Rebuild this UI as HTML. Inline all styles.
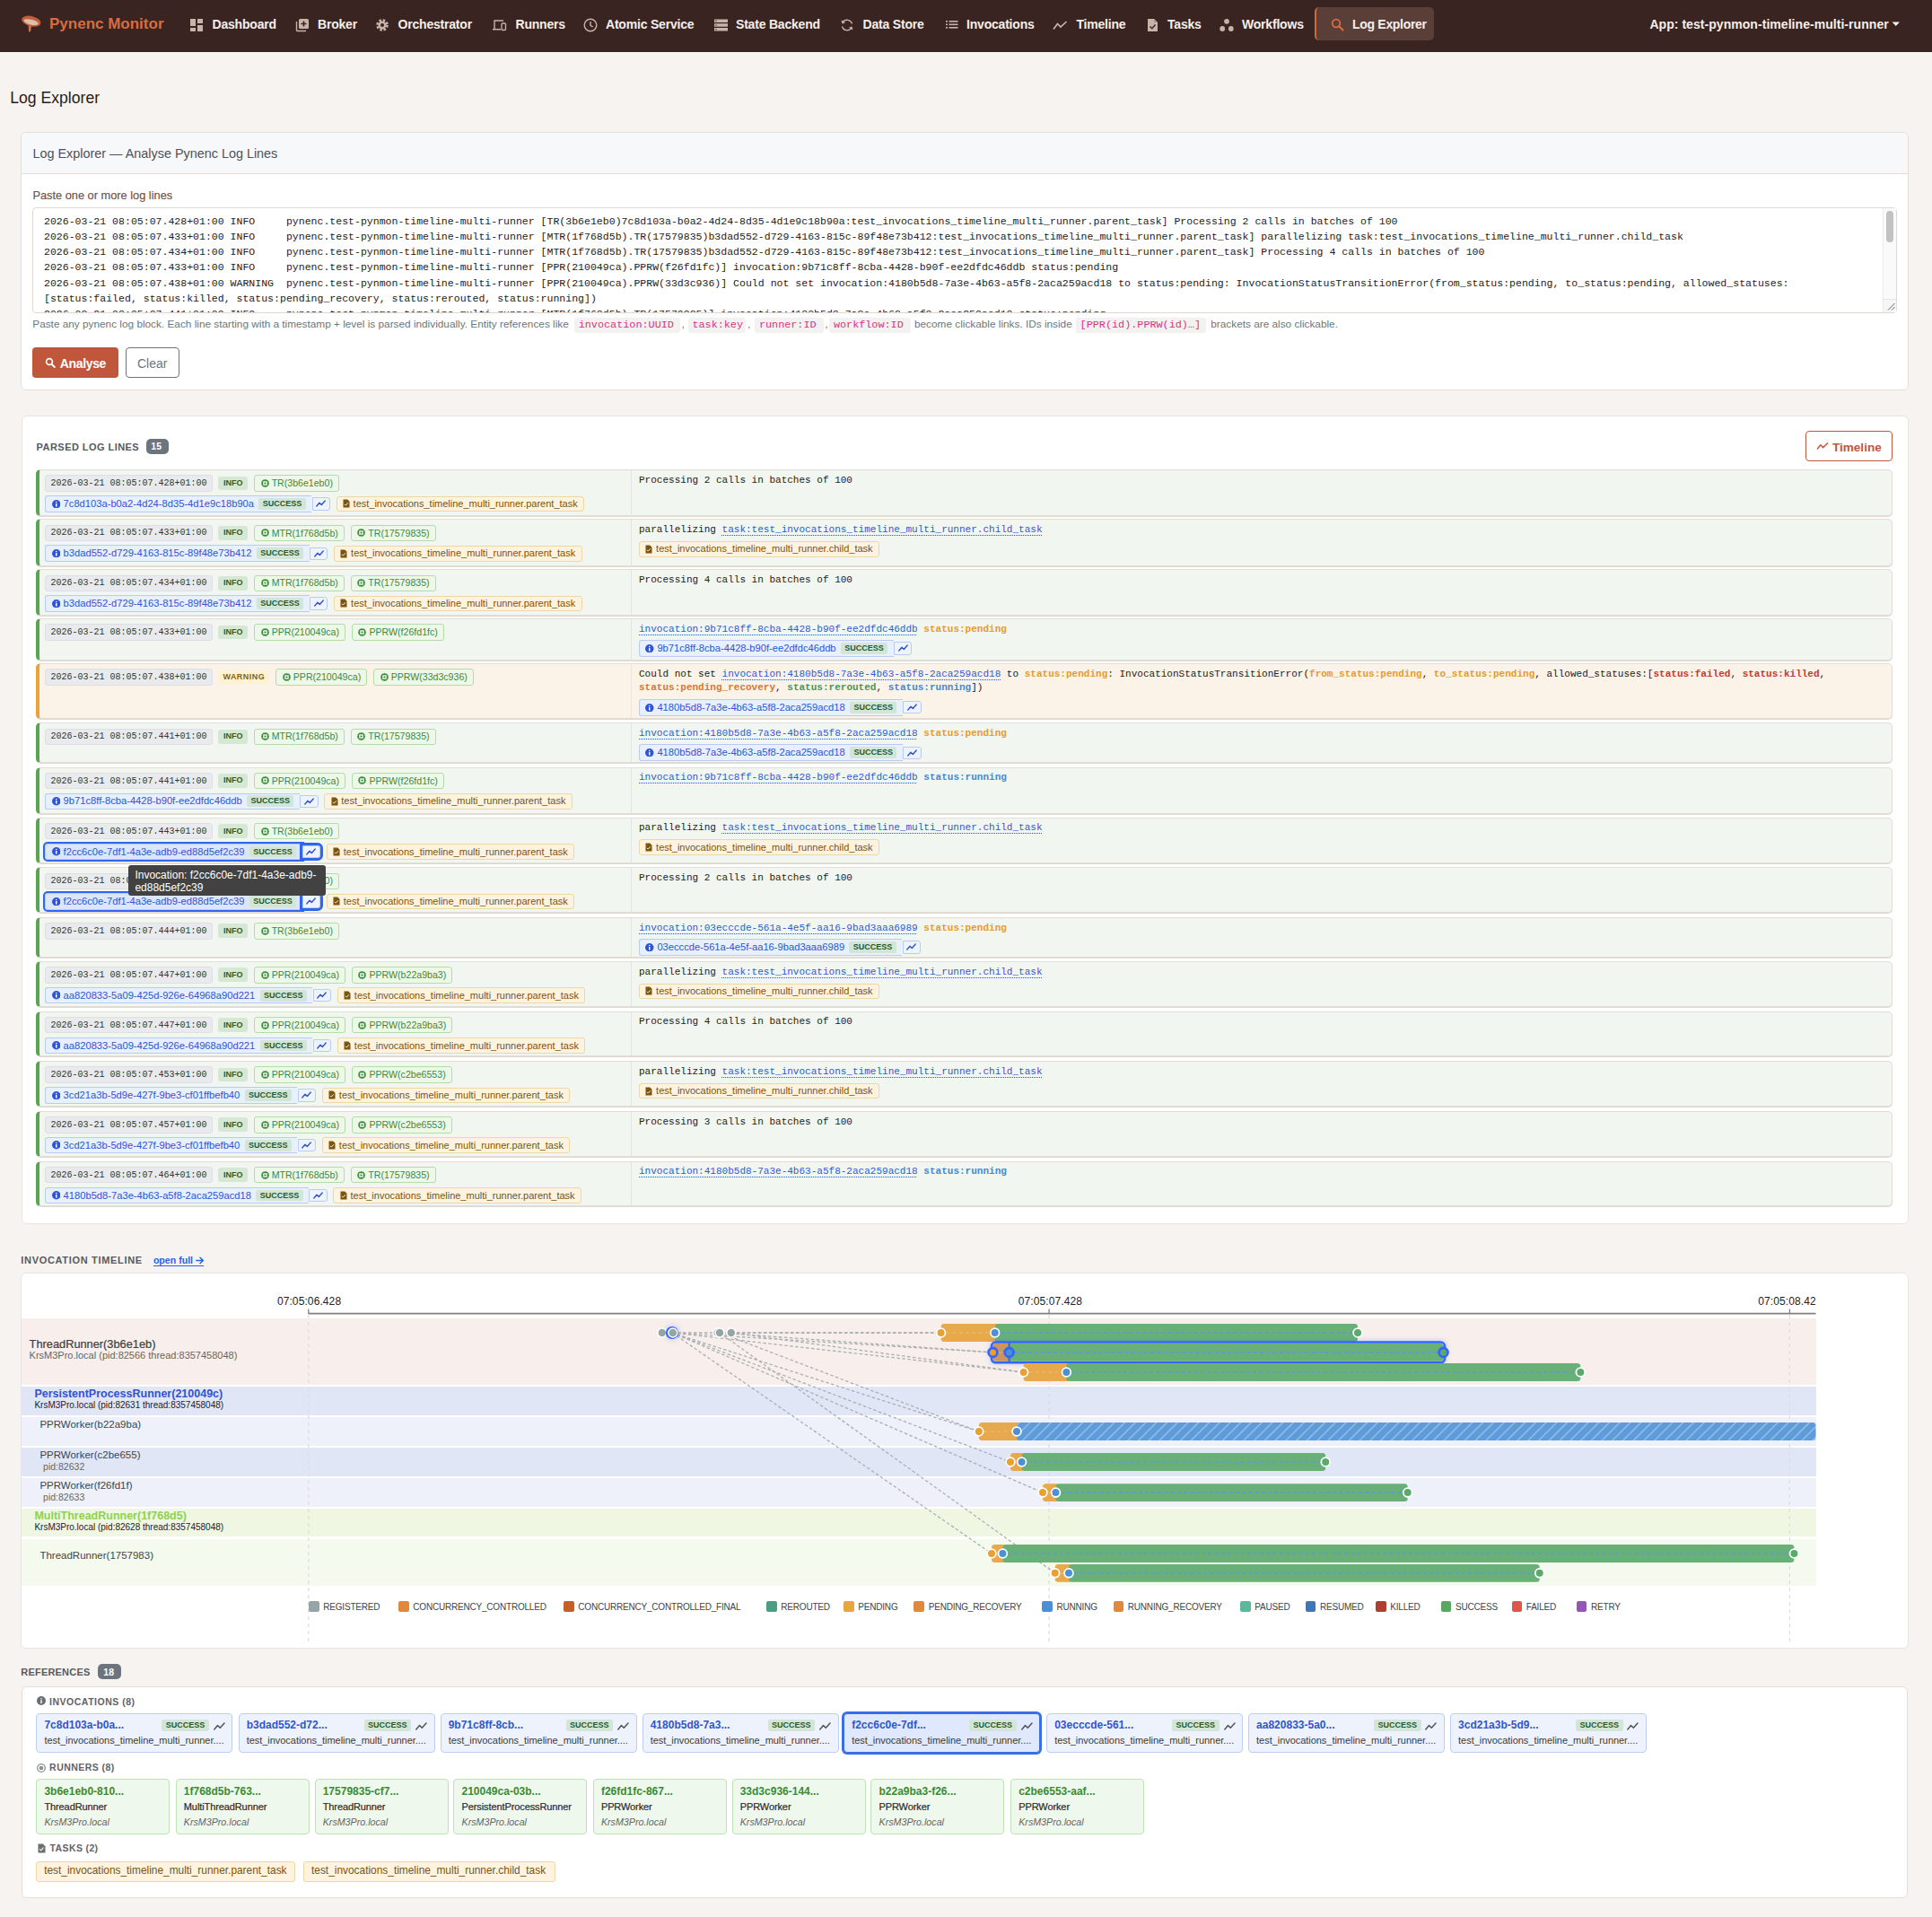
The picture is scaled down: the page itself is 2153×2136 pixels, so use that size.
<!DOCTYPE html>
<html><head><meta charset="utf-8"><title>Log Explorer</title><style>
html,body{margin:0;padding:0}
body{width:2153px;height:2136px;position:relative;overflow:hidden;background:#f7f3f0;font-family:'Liberation Sans',sans-serif}
.t{position:absolute;white-space:pre}
.b{position:absolute}
.row{position:absolute;left:40px;width:2069.3px;background:#f1f6f0;border:1px solid #e3ddd6;border-left:4px solid #5aa454;border-radius:5px;box-sizing:border-box;box-shadow:0 1px 0 #e0d9d2}
.row::after{content:"";position:absolute;left:659.4px;top:0;bottom:0;width:1px;background:#e0e4e8}
.warnrow{background:#fbf2e8;border-left-color:#e8a43a}
.warnrow::after{background:#efe5da}
.ln{position:absolute;display:flex;align-items:center;gap:6.7px;height:18.4px;white-space:nowrap}
.tsp{font:400 10px/1 'Liberation Mono',monospace;color:#333;background:#e9eaee;border:1px solid #dedfe4;border-radius:3px;height:18.4px;padding:1.2px 5.2px 0;display:flex;align-items:center;box-sizing:border-box}
.lvl{font:700 9px/1 'Liberation Sans',sans-serif;color:#2c5e2c;background:#d5e8d3;border-radius:3px;height:15.8px;padding:0 5.7px;display:flex;align-items:center;box-sizing:border-box}
.lvl.warn{color:#86620e;background:#fdf3d2;padding:0 5.2px;letter-spacing:0.45px}
.rp{display:flex;align-items:center;gap:3.1px;height:18.4px;padding:0 6px 0 6.7px;border:1px solid #b2dca8;background:#edf8e9;color:#3c8a3c;font:400 10.6px/1 'Liberation Sans',sans-serif;border-radius:3px;box-sizing:border-box}
.ig{display:flex;align-items:center;height:18.5px}
.ip{display:flex;align-items:center;height:18.5px;box-sizing:border-box;border:1px solid #b8ccf3;border-right:none;background:#e8effd;border-radius:3px 0 0 3px;padding:0 0 0 6.4px;color:#2f55d4;font:400 11.18px/1 'Liberation Sans',sans-serif}
.iid{margin-left:3.5px}
.suc{margin-left:5.3px;margin-right:6.5px;font:700 9px/1 'Liberation Sans',sans-serif;color:#1f5a2e;background:#d3e5d6;height:12.7px;padding:0 4.45px;border-radius:2px;display:flex;align-items:center}
.ib{display:flex;align-items:center;justify-content:center;width:20.3px;height:14.4px;box-sizing:border-box;border:1px solid #b8ccf3;background:#eef3fd;border-radius:0 3px 3px 0;margin-left:0.3px}
.hl .ip{background:#dce6fb;outline:2.3px solid #2f66f0}
.hl .ib{outline:3px solid #2f66f0;margin-left:0}
.tp{display:flex;align-items:center;gap:3.7px;height:17.7px;padding:0 6.3px 0 6.4px;border:1px solid #efd6a6;background:#fdf3df;color:#7a5510;font:400 11px/1 'Liberation Sans',sans-serif;border-radius:3px;box-sizing:border-box}
.msg{position:absolute;left:712px;width:1390px;font:400 11.02px/15.7px 'Liberation Mono',monospace;color:#222;white-space:nowrap}
.lk{color:#2d5bd8;text-decoration:underline dotted #2d5bd8;text-underline-offset:2.5px;text-decoration-thickness:1px}
.st{font-weight:700}
.tip{position:absolute;background:#424242;border-radius:3px}
</style></head>
<body>
<div class="b" style="left:0.00px;top:0.00px;width:2153.00px;height:58.00px;background:#3a2422"></div><svg class="b" style="left:18.00px;top:12.00px;" width="40" height="32" viewBox="0 0 40 32"><path d="M13.6 15.5 L17.2 15.8 L16.2 22.6 Q15.3 24.6 14 23 Z" fill="#c9714e"/>
<ellipse cx="16.8" cy="11.6" rx="10.9" ry="5.6" transform="rotate(14 16.8 11.6)" fill="#c45f38"/>
<ellipse cx="16.6" cy="12.6" rx="8.3" ry="2.9" transform="rotate(14 16.6 12.6)" fill="#dcbfae"/></svg><div class="t" style="left:55.0px;top:17.85px;font:600 17px/1 'Liberation Sans',sans-serif;color:#d96d3d;">Pynenc Monitor</div><svg class="b" style="left:210.50px;top:20.00px;" width="16" height="16" viewBox="0 0 16 16"><rect x="1" y="1" width="6" height="8" fill="#c9b3a9"/><rect x="9" y="1" width="6" height="5" fill="#c9b3a9"/><rect x="1" y="11" width="6" height="4" fill="#c9b3a9"/><rect x="9" y="8" width="6" height="7" fill="#c9b3a9"/></svg><div class="t" style="left:236.5px;top:20.10px;font:600 14px/1 'Liberation Sans',sans-serif;color:#f5efeb;letter-spacing:-0.2px;">Dashboard</div><svg class="b" style="left:329.00px;top:20.00px;" width="16" height="16" viewBox="0 0 16 16"><rect x="4" y="1" width="11" height="11" rx="1.5" fill="#c9b3a9"/><path d="M1.5 4 V13.5 a1 1 0 0 0 1 1 H12" stroke="#c9b3a9" stroke-width="1.4" fill="none"/><path d="M9.5 3.5 V9.5 M6.5 6.5 H12.5" stroke="#3a2422" stroke-width="1.6"/></svg><div class="t" style="left:354.0px;top:20.10px;font:600 14px/1 'Liberation Sans',sans-serif;color:#f5efeb;letter-spacing:-0.2px;">Broker</div><svg class="b" style="left:418.00px;top:20.00px;" width="16" height="16" viewBox="0 0 16 16"><circle cx="8" cy="8" r="5.2" fill="none" stroke="#c9b3a9" stroke-width="3.2" stroke-dasharray="2.3 1.8"/><circle cx="8" cy="8" r="4.5" fill="#c9b3a9"/><circle cx="8" cy="8" r="2" fill="#3a2422"/></svg><div class="t" style="left:443.5px;top:20.10px;font:600 14px/1 'Liberation Sans',sans-serif;color:#f5efeb;letter-spacing:-0.2px;">Orchestrator</div><svg class="b" style="left:548.00px;top:20.00px;" width="18" height="16" viewBox="0 0 18 16"><path d="M2.5 3 H13 M3 3 V12 M1 12.8 H10" stroke="#c9b3a9" stroke-width="1.4" fill="none"/><rect x="11" y="6" width="4.5" height="7.5" rx="1" fill="none" stroke="#c9b3a9" stroke-width="1.3"/></svg><div class="t" style="left:574.5px;top:20.10px;font:600 14px/1 'Liberation Sans',sans-serif;color:#f5efeb;letter-spacing:-0.2px;">Runners</div><svg class="b" style="left:649.50px;top:20.00px;" width="16" height="16" viewBox="0 0 16 16"><circle cx="8" cy="8" r="6.8" fill="none" stroke="#c9b3a9" stroke-width="1.4"/><path d="M8 4 V8.3 L10.8 10" stroke="#c9b3a9" stroke-width="1.4" fill="none"/></svg><div class="t" style="left:675.0px;top:20.10px;font:600 14px/1 'Liberation Sans',sans-serif;color:#f5efeb;letter-spacing:-0.2px;">Atomic Service</div><svg class="b" style="left:794.70px;top:20.00px;" width="16" height="16" viewBox="0 0 16 16"><rect x="1" y="1.5" width="15" height="3.5" fill="#c9b3a9"/><rect x="1" y="6.2" width="15" height="3.5" fill="#c9b3a9"/><rect x="1" y="11" width="15" height="3.5" fill="#c9b3a9"/><circle cx="3" cy="3.2" r=".7" fill="#3a2422"/><circle cx="3" cy="8" r=".7" fill="#3a2422"/><circle cx="3" cy="12.7" r=".7" fill="#3a2422"/></svg><div class="t" style="left:820.0px;top:20.10px;font:600 14px/1 'Liberation Sans',sans-serif;color:#f5efeb;letter-spacing:-0.2px;">State Backend</div><svg class="b" style="left:936.40px;top:20.00px;" width="16" height="16" viewBox="0 0 16 16"><path d="M13.5 6.5 A5.8 5.8 0 0 0 3 5 M2.5 9.5 A5.8 5.8 0 0 0 13 11" stroke="#c9b3a9" stroke-width="1.4" fill="none"/><path d="M1.5 2.5 L2.5 6.5 L6.2 5.2 Z M14.5 13.5 L13.5 9.5 L9.8 10.8 Z" fill="#c9b3a9"/></svg><div class="t" style="left:961.6px;top:20.10px;font:600 14px/1 'Liberation Sans',sans-serif;color:#f5efeb;letter-spacing:-0.2px;">Data Store</div><svg class="b" style="left:1053.00px;top:20.00px;" width="16" height="16" viewBox="0 0 16 16"><rect x="1" y="3" width="2" height="1.6" fill="#c9b3a9"/><rect x="1" y="6.5" width="2" height="1.6" fill="#c9b3a9"/><rect x="1" y="10" width="2" height="1.6" fill="#c9b3a9"/><rect x="4.5" y="3" width="10" height="1.6" fill="#c9b3a9"/><rect x="4.5" y="6.5" width="10" height="1.6" fill="#c9b3a9"/><rect x="4.5" y="10" width="10" height="1.6" fill="#c9b3a9"/></svg><div class="t" style="left:1077.0px;top:20.10px;font:600 14px/1 'Liberation Sans',sans-serif;color:#f5efeb;letter-spacing:-0.2px;">Invocations</div><svg class="b" style="left:1173.00px;top:20.00px;" width="17" height="16" viewBox="0 0 17 16"><path d="M1 12.5 L5.5 6.5 L9 10 L15.5 4" stroke="#c9b3a9" stroke-width="1.7" fill="none"/></svg><div class="t" style="left:1199.4px;top:20.10px;font:600 14px/1 'Liberation Sans',sans-serif;color:#f5efeb;letter-spacing:-0.2px;">Timeline</div><svg class="b" style="left:1277.00px;top:20.00px;" width="14" height="16" viewBox="0 0 14 16"><path d="M2 1 H9 L13 5 V15 H2 Z" fill="#c9b3a9"/><path d="M9 1 V5 H13" fill="#a8928a"/><path d="M4.5 9.5 L6.8 11.8 L10.5 7.5" stroke="#3a2422" stroke-width="1.4" fill="none"/></svg><div class="t" style="left:1301.0px;top:20.10px;font:600 14px/1 'Liberation Sans',sans-serif;color:#f5efeb;letter-spacing:-0.2px;">Tasks</div><svg class="b" style="left:1359.00px;top:20.00px;" width="16" height="16" viewBox="0 0 16 16"><circle cx="8" cy="3.8" r="2.9" fill="#c9b3a9"/><circle cx="3.2" cy="12" r="2.9" fill="#c9b3a9"/><circle cx="12.8" cy="12" r="2.9" fill="#c9b3a9"/></svg><div class="t" style="left:1384.0px;top:20.10px;font:600 14px/1 'Liberation Sans',sans-serif;color:#f5efeb;letter-spacing:-0.2px;">Workflows</div><div class="b" style="left:1465.00px;top:8.00px;width:133.00px;height:37.00px;background:#5a3e38;border-radius:5px;border-left:2px solid #d2693a;box-sizing:border-box"></div><svg class="b" style="left:1483.00px;top:20.00px;" width="15" height="15" viewBox="0 0 15 15"><circle cx="6" cy="6" r="4.3" fill="none" stroke="#d96d3d" stroke-width="1.8"/><path d="M9.2 9.2 L13.5 13.5" stroke="#d96d3d" stroke-width="2" stroke-linecap="round"/></svg><div class="t" style="left:1507.0px;top:20.10px;font:600 14px/1 'Liberation Sans',sans-serif;color:#f5efeb;letter-spacing:-0.3px;">Log Explorer</div><div class="t" style="left:1838.4px;top:20.10px;font:600 14px/1 'Liberation Sans',sans-serif;color:#f5efeb;letter-spacing:0.05px;">App: test-pynmon-timeline-multi-runner</div><svg class="b" style="left:2108.00px;top:24.00px;" width="10" height="6" viewBox="0 0 10 6"><path d="M0.5 0.5 H9 L4.75 5 Z" fill="#f5efeb"/></svg><div class="t" style="left:11.3px;top:101.24px;font:400 17.6px/1 'Liberation Sans',sans-serif;color:#2a1c18;">Log Explorer</div><div class="b" style="left:23.00px;top:147.00px;width:2103.80px;height:287.60px;background:#fff;border:1px solid #e6ddd7;border-radius:6px;box-sizing:border-box"></div><div class="b" style="left:24.00px;top:148.00px;width:2101.80px;height:45.80px;background:#f7f8fa;border-bottom:1px solid #e6ddd7;border-radius:5px 5px 0 0;box-sizing:border-box"></div><div class="t" style="left:36.5px;top:163.96px;font:400 14.4px/1 'Liberation Sans',sans-serif;color:#4a5260;">Log Explorer — Analyse Pynenc Log Lines</div><div class="t" style="left:36.4px;top:212.32px;font:400 12.8px/1 'Liberation Sans',sans-serif;color:#6b5248;-webkit-text-stroke:0.15px #6b5248;">Paste one or more log lines</div><div class="b" style="left:36.00px;top:231.40px;width:2078.00px;height:117.20px;background:#fff;border:1px solid #e2d8d2;border-radius:4px;box-sizing:border-box"></div><div class="b" style="left:37px;top:232.4px;width:2061px;height:115.2px;overflow:hidden"><div style="position:absolute;left:12px;top:5.2px;font:400 11.54px/17.23px 'Liberation Mono',monospace;color:#222;white-space:pre">2026-03-21 08:05:07.428+01:00 INFO     pynenc.test-pynmon-timeline-multi-runner [TR(3b6e1eb0)7c8d103a-b0a2-4d24-8d35-4d1e9c18b90a:test_invocations_timeline_multi_runner.parent_task] Processing 2 calls in batches of 100
2026-03-21 08:05:07.433+01:00 INFO     pynenc.test-pynmon-timeline-multi-runner [MTR(1f768d5b).TR(17579835)b3dad552-d729-4163-815c-89f48e73b412:test_invocations_timeline_multi_runner.parent_task] parallelizing task:test_invocations_timeline_multi_runner.child_task
2026-03-21 08:05:07.434+01:00 INFO     pynenc.test-pynmon-timeline-multi-runner [MTR(1f768d5b).TR(17579835)b3dad552-d729-4163-815c-89f48e73b412:test_invocations_timeline_multi_runner.parent_task] Processing 4 calls in batches of 100
2026-03-21 08:05:07.433+01:00 INFO     pynenc.test-pynmon-timeline-multi-runner [PPR(210049ca).PPRW(f26fd1fc)] invocation:9b71c8ff-8cba-4428-b90f-ee2dfdc46ddb status:pending
2026-03-21 08:05:07.438+01:00 WARNING  pynenc.test-pynmon-timeline-multi-runner [PPR(210049ca).PPRW(33d3c936)] Could not set invocation:4180b5d8-7a3e-4b63-a5f8-2aca259acd18 to status:pending: InvocationStatusTransitionError(from_status:pending, to_status:pending, allowed_statuses:
[status:failed, status:killed, status:pending_recovery, status:rerouted, status:running])
2026-03-21 08:05:07.441+01:00 INFO     pynenc.test-pynmon-timeline-multi-runner [MTR(1f768d5b).TR(17579835)] invocation:4180b5d8-7a3e-4b63-a5f8-2aca259acd18 status:pending</div></div><div class="b" style="left:2098.00px;top:232.40px;width:15.00px;height:115.20px;background:#fafafa;border-left:1px solid #ececec;box-sizing:border-box"></div><div class="b" style="left:2102.00px;top:235.30px;width:8.00px;height:34.50px;background:#c2c2c2;border-radius:4px"></div><div class="b" style="left:2098.00px;top:333.00px;width:15.00px;height:14.60px;background:#f6f6f6;border-top:1px solid #e6e6e6;border-left:1px solid #ececec;box-sizing:border-box"></div><svg class="b" style="left:2103.00px;top:337.00px;" width="9" height="9" viewBox="0 0 9 9"><path d="M8.5 1 L1 8.5 M8.5 5 L5 8.5" stroke="#555" stroke-width="0.9"/></svg><div class="t" style="left:36.3px;top:355.97px;font:400 11.8px/1 'Liberation Sans',sans-serif;color:#6c757d;">Paste any pynenc log block. Each line starting with a timestamp + level is parsed individually. Entity references like</div><div class="b" style="left:639.80px;top:354.20px;width:118.20px;height:16.60px;background:#f4f2f1;border-radius:3px"></div><div class="t" style="left:644.7px;top:357.23px;font:400 11.8px/1 'Liberation Mono',monospace;color:#d63384;">invocation:UUID</div><div class="t" style="left:759.5px;top:355.97px;font:400 11.8px/1 'Liberation Sans',sans-serif;color:#6c757d;">,</div><div class="b" style="left:766.50px;top:354.20px;width:64.50px;height:16.60px;background:#f4f2f1;border-radius:3px"></div><div class="t" style="left:771.4px;top:357.23px;font:400 11.8px/1 'Liberation Mono',monospace;color:#d63384;">task:key</div><div class="t" style="left:833.0px;top:355.97px;font:400 11.8px/1 'Liberation Sans',sans-serif;color:#6c757d;">,</div><div class="b" style="left:841.00px;top:354.20px;width:77.00px;height:16.60px;background:#f4f2f1;border-radius:3px"></div><div class="t" style="left:845.9px;top:357.23px;font:400 11.8px/1 'Liberation Mono',monospace;color:#d63384;">runner:ID</div><div class="t" style="left:919.3px;top:355.97px;font:400 11.8px/1 'Liberation Sans',sans-serif;color:#6c757d;">,</div><div class="b" style="left:924.00px;top:354.20px;width:90.50px;height:16.60px;background:#f4f2f1;border-radius:3px"></div><div class="t" style="left:928.9px;top:357.23px;font:400 11.8px/1 'Liberation Mono',monospace;color:#d63384;">workflow:ID</div><div class="t" style="left:1019.0px;top:355.97px;font:400 11.8px/1 'Liberation Sans',sans-serif;color:#6c757d;">become clickable links. IDs inside</div><div class="b" style="left:1198.70px;top:354.20px;width:145.60px;height:16.60px;background:#f4f2f1;border-radius:3px"></div><div class="t" style="left:1203.6px;top:357.23px;font:400 11.8px/1 'Liberation Mono',monospace;color:#d63384;">[PPR(id).PPRW(id)…]</div><div class="t" style="left:1349.3px;top:355.97px;font:400 11.8px/1 'Liberation Sans',sans-serif;color:#6c757d;">brackets are also clickable.</div><div class="b" style="left:36.10px;top:387.30px;width:95.70px;height:34.10px;background:#c0573a;border-radius:4px"></div><svg class="b" style="left:50.00px;top:398.00px;" width="12" height="13" viewBox="0 0 12 13"><circle cx="5" cy="5" r="3.4" fill="none" stroke="#fff" stroke-width="1.7"/><path d="M7.5 7.6 L10.8 11" stroke="#fff" stroke-width="2" stroke-linecap="round"/></svg><div class="t" style="left:66.8px;top:397.50px;font:600 14px/1 'Liberation Sans',sans-serif;color:#fff;letter-spacing:-0.35px;">Analyse</div><div class="b" style="left:140.00px;top:387.30px;width:59.70px;height:34.10px;background:#fff;border:1px solid #6c757d;border-radius:4px;box-sizing:border-box"></div><div class="t" style="left:153.0px;top:397.50px;font:400 14px/1 'Liberation Sans',sans-serif;color:#6c757d;">Clear</div><div class="b" style="left:23.50px;top:463.30px;width:2103.10px;height:900.30px;background:#fff;border:1px solid #e8e4e0;border-radius:6px;box-sizing:border-box"></div><div class="t" style="left:40.6px;top:492.65px;font:600 11px/1 'Liberation Sans',sans-serif;color:#555b61;letter-spacing:0.45px;">PARSED LOG LINES</div><div class="b" style="left:163.00px;top:489.00px;width:24.70px;height:16.80px;background:#6c757d;border-radius:5px"></div><div class="t" style="left:168.3px;top:492.47px;font:700 10.5px/1 'Liberation Sans',sans-serif;color:#fff;">15</div><div class="b" style="left:2011.80px;top:480.40px;width:97.50px;height:33.90px;background:#fff;border:1px solid #c0573a;border-radius:4px;box-sizing:border-box"></div><svg class="b" style="left:2024.00px;top:492.00px;" width="14" height="10" viewBox="0 0 14 10"><path d="M1 8.5 L4.8 3.8 L7.6 6.6 L13 1.5" stroke="#c0573a" stroke-width="1.5" fill="none"/></svg><div class="t" style="left:2041.9px;top:491.84px;font:600 13.6px/1 'Liberation Sans',sans-serif;color:#c0573a;">Timeline</div><div class="row" style="top:523.1px;height:51.6px"></div><div class="ln" style="left:50.2px;top:529.4px"><span class="tsp">2026-03-21 08:05:07.428+01:00</span><span class="lvl">INFO</span><span class="rp"><svg width="9" height="9" viewBox="0 0 9 9" style="flex:none"><rect x="1.6" y="1.6" width="5.8" height="5.8" rx="0.8" fill="none" stroke="#3c8a3c" stroke-width="1.2"/><circle cx="4.5" cy="4.5" r="1.1" fill="#3c8a3c"/><path d="M3 0V1.6M4.5 0V1.6M6 0V1.6M3 7.4V9M4.5 7.4V9M6 7.4V9M0 3H1.6M0 4.5H1.6M0 6H1.6M7.4 3H9M7.4 4.5H9M7.4 6H9" stroke="#3c8a3c" stroke-width="0.9"/></svg><span>TR(3b6e1eb0)</span></span></div><div class="ln" style="left:50.2px;top:552.2px"><span class="ig"><span class="ip"><svg width="9.5" height="9.5" viewBox="0 0 10 10" style="flex:none"><circle cx="5" cy="5" r="5" fill="#2f55d4"/><rect x="4.25" y="4.2" width="1.5" height="3.8" fill="#fff"/><circle cx="5" cy="2.7" r="0.85" fill="#fff"/></svg><span class="iid">7c8d103a-b0a2-4d24-8d35-4d1e9c18b90a</span><span class="suc">SUCCESS</span></span><span class="ib"><svg width="11" height="8" viewBox="0 0 11 8" style="flex:none"><path d="M0.8 7 L4 3.3 L6.3 5.5 L10.2 1" stroke="#2f55d4" stroke-width="1.4" fill="none" stroke-linecap="round" stroke-linejoin="round"/></svg></span></span><span class="tp"><svg width="8" height="10" viewBox="0 0 8 10" style="flex:none"><path d="M0.5 0.5 H5.2 L7.5 2.8 V9.5 H0.5 Z" fill="#7a5510"/><path d="M2 5.8 L3.3 7.1 L5.8 4.3" stroke="#fdf2de" stroke-width="1" fill="none"/></svg><span>test_invocations_timeline_multi_runner.parent_task</span></span></div><div class="msg" style="top:527.7px">Processing 2 calls in batches of 100</div><div class="row" style="top:578.4px;height:52.2px"></div><div class="ln" style="left:50.2px;top:584.7px"><span class="tsp">2026-03-21 08:05:07.433+01:00</span><span class="lvl">INFO</span><span class="rp"><svg width="9" height="9" viewBox="0 0 9 9" style="flex:none"><rect x="1.6" y="1.6" width="5.8" height="5.8" rx="0.8" fill="none" stroke="#3c8a3c" stroke-width="1.2"/><circle cx="4.5" cy="4.5" r="1.1" fill="#3c8a3c"/><path d="M3 0V1.6M4.5 0V1.6M6 0V1.6M3 7.4V9M4.5 7.4V9M6 7.4V9M0 3H1.6M0 4.5H1.6M0 6H1.6M7.4 3H9M7.4 4.5H9M7.4 6H9" stroke="#3c8a3c" stroke-width="0.9"/></svg><span>MTR(1f768d5b)</span></span><span class="rp"><svg width="9" height="9" viewBox="0 0 9 9" style="flex:none"><rect x="1.6" y="1.6" width="5.8" height="5.8" rx="0.8" fill="none" stroke="#3c8a3c" stroke-width="1.2"/><circle cx="4.5" cy="4.5" r="1.1" fill="#3c8a3c"/><path d="M3 0V1.6M4.5 0V1.6M6 0V1.6M3 7.4V9M4.5 7.4V9M6 7.4V9M0 3H1.6M0 4.5H1.6M0 6H1.6M7.4 3H9M7.4 4.5H9M7.4 6H9" stroke="#3c8a3c" stroke-width="0.9"/></svg><span>TR(17579835)</span></span></div><div class="ln" style="left:50.2px;top:607.5px"><span class="ig"><span class="ip"><svg width="9.5" height="9.5" viewBox="0 0 10 10" style="flex:none"><circle cx="5" cy="5" r="5" fill="#2f55d4"/><rect x="4.25" y="4.2" width="1.5" height="3.8" fill="#fff"/><circle cx="5" cy="2.7" r="0.85" fill="#fff"/></svg><span class="iid">b3dad552-d729-4163-815c-89f48e73b412</span><span class="suc">SUCCESS</span></span><span class="ib"><svg width="11" height="8" viewBox="0 0 11 8" style="flex:none"><path d="M0.8 7 L4 3.3 L6.3 5.5 L10.2 1" stroke="#2f55d4" stroke-width="1.4" fill="none" stroke-linecap="round" stroke-linejoin="round"/></svg></span></span><span class="tp"><svg width="8" height="10" viewBox="0 0 8 10" style="flex:none"><path d="M0.5 0.5 H5.2 L7.5 2.8 V9.5 H0.5 Z" fill="#7a5510"/><path d="M2 5.8 L3.3 7.1 L5.8 4.3" stroke="#fdf2de" stroke-width="1" fill="none"/></svg><span>test_invocations_timeline_multi_runner.parent_task</span></span></div><div class="msg" style="top:583.0px">parallelizing <span class="lk">task:test_invocations_timeline_multi_runner.child_task</span></div><div class="ln" style="left:712px;top:602.7px"><span class="tp"><svg width="8" height="10" viewBox="0 0 8 10" style="flex:none"><path d="M0.5 0.5 H5.2 L7.5 2.8 V9.5 H0.5 Z" fill="#7a5510"/><path d="M2 5.8 L3.3 7.1 L5.8 4.3" stroke="#fdf2de" stroke-width="1" fill="none"/></svg><span>test_invocations_timeline_multi_runner.child_task</span></span></div><div class="row" style="top:634.2px;height:51.6px"></div><div class="ln" style="left:50.2px;top:640.5px"><span class="tsp">2026-03-21 08:05:07.434+01:00</span><span class="lvl">INFO</span><span class="rp"><svg width="9" height="9" viewBox="0 0 9 9" style="flex:none"><rect x="1.6" y="1.6" width="5.8" height="5.8" rx="0.8" fill="none" stroke="#3c8a3c" stroke-width="1.2"/><circle cx="4.5" cy="4.5" r="1.1" fill="#3c8a3c"/><path d="M3 0V1.6M4.5 0V1.6M6 0V1.6M3 7.4V9M4.5 7.4V9M6 7.4V9M0 3H1.6M0 4.5H1.6M0 6H1.6M7.4 3H9M7.4 4.5H9M7.4 6H9" stroke="#3c8a3c" stroke-width="0.9"/></svg><span>MTR(1f768d5b)</span></span><span class="rp"><svg width="9" height="9" viewBox="0 0 9 9" style="flex:none"><rect x="1.6" y="1.6" width="5.8" height="5.8" rx="0.8" fill="none" stroke="#3c8a3c" stroke-width="1.2"/><circle cx="4.5" cy="4.5" r="1.1" fill="#3c8a3c"/><path d="M3 0V1.6M4.5 0V1.6M6 0V1.6M3 7.4V9M4.5 7.4V9M6 7.4V9M0 3H1.6M0 4.5H1.6M0 6H1.6M7.4 3H9M7.4 4.5H9M7.4 6H9" stroke="#3c8a3c" stroke-width="0.9"/></svg><span>TR(17579835)</span></span></div><div class="ln" style="left:50.2px;top:663.3px"><span class="ig"><span class="ip"><svg width="9.5" height="9.5" viewBox="0 0 10 10" style="flex:none"><circle cx="5" cy="5" r="5" fill="#2f55d4"/><rect x="4.25" y="4.2" width="1.5" height="3.8" fill="#fff"/><circle cx="5" cy="2.7" r="0.85" fill="#fff"/></svg><span class="iid">b3dad552-d729-4163-815c-89f48e73b412</span><span class="suc">SUCCESS</span></span><span class="ib"><svg width="11" height="8" viewBox="0 0 11 8" style="flex:none"><path d="M0.8 7 L4 3.3 L6.3 5.5 L10.2 1" stroke="#2f55d4" stroke-width="1.4" fill="none" stroke-linecap="round" stroke-linejoin="round"/></svg></span></span><span class="tp"><svg width="8" height="10" viewBox="0 0 8 10" style="flex:none"><path d="M0.5 0.5 H5.2 L7.5 2.8 V9.5 H0.5 Z" fill="#7a5510"/><path d="M2 5.8 L3.3 7.1 L5.8 4.3" stroke="#fdf2de" stroke-width="1" fill="none"/></svg><span>test_invocations_timeline_multi_runner.parent_task</span></span></div><div class="msg" style="top:638.8px">Processing 4 calls in batches of 100</div><div class="row" style="top:689.0px;height:46.9px"></div><div class="ln" style="left:50.2px;top:695.3px"><span class="tsp">2026-03-21 08:05:07.433+01:00</span><span class="lvl">INFO</span><span class="rp"><svg width="9" height="9" viewBox="0 0 9 9" style="flex:none"><rect x="1.6" y="1.6" width="5.8" height="5.8" rx="0.8" fill="none" stroke="#3c8a3c" stroke-width="1.2"/><circle cx="4.5" cy="4.5" r="1.1" fill="#3c8a3c"/><path d="M3 0V1.6M4.5 0V1.6M6 0V1.6M3 7.4V9M4.5 7.4V9M6 7.4V9M0 3H1.6M0 4.5H1.6M0 6H1.6M7.4 3H9M7.4 4.5H9M7.4 6H9" stroke="#3c8a3c" stroke-width="0.9"/></svg><span>PPR(210049ca)</span></span><span class="rp"><svg width="9" height="9" viewBox="0 0 9 9" style="flex:none"><rect x="1.6" y="1.6" width="5.8" height="5.8" rx="0.8" fill="none" stroke="#3c8a3c" stroke-width="1.2"/><circle cx="4.5" cy="4.5" r="1.1" fill="#3c8a3c"/><path d="M3 0V1.6M4.5 0V1.6M6 0V1.6M3 7.4V9M4.5 7.4V9M6 7.4V9M0 3H1.6M0 4.5H1.6M0 6H1.6M7.4 3H9M7.4 4.5H9M7.4 6H9" stroke="#3c8a3c" stroke-width="0.9"/></svg><span>PPRW(f26fd1fc)</span></span></div><div class="msg" style="top:693.6px"><span class="lk">invocation:9b71c8ff-8cba-4428-b90f-ee2dfdc46ddb</span> <b class="st" style="color:#e89a2c">status:pending</b></div><div class="ln" style="left:712px;top:713.3px"><span class="ig"><span class="ip"><svg width="9.5" height="9.5" viewBox="0 0 10 10" style="flex:none"><circle cx="5" cy="5" r="5" fill="#2f55d4"/><rect x="4.25" y="4.2" width="1.5" height="3.8" fill="#fff"/><circle cx="5" cy="2.7" r="0.85" fill="#fff"/></svg><span class="iid">9b71c8ff-8cba-4428-b90f-ee2dfdc46ddb</span><span class="suc">SUCCESS</span></span><span class="ib"><svg width="11" height="8" viewBox="0 0 11 8" style="flex:none"><path d="M0.8 7 L4 3.3 L6.3 5.5 L10.2 1" stroke="#2f55d4" stroke-width="1.4" fill="none" stroke-linecap="round" stroke-linejoin="round"/></svg></span></span></div><div class="row warnrow" style="top:739.1px;height:62.1px"></div><div class="ln" style="left:50.2px;top:745.4px"><span class="tsp">2026-03-21 08:05:07.438+01:00</span><span class="lvl warn">WARNING</span><span class="rp"><svg width="9" height="9" viewBox="0 0 9 9" style="flex:none"><rect x="1.6" y="1.6" width="5.8" height="5.8" rx="0.8" fill="none" stroke="#3c8a3c" stroke-width="1.2"/><circle cx="4.5" cy="4.5" r="1.1" fill="#3c8a3c"/><path d="M3 0V1.6M4.5 0V1.6M6 0V1.6M3 7.4V9M4.5 7.4V9M6 7.4V9M0 3H1.6M0 4.5H1.6M0 6H1.6M7.4 3H9M7.4 4.5H9M7.4 6H9" stroke="#3c8a3c" stroke-width="0.9"/></svg><span>PPR(210049ca)</span></span><span class="rp"><svg width="9" height="9" viewBox="0 0 9 9" style="flex:none"><rect x="1.6" y="1.6" width="5.8" height="5.8" rx="0.8" fill="none" stroke="#3c8a3c" stroke-width="1.2"/><circle cx="4.5" cy="4.5" r="1.1" fill="#3c8a3c"/><path d="M3 0V1.6M4.5 0V1.6M6 0V1.6M3 7.4V9M4.5 7.4V9M6 7.4V9M0 3H1.6M0 4.5H1.6M0 6H1.6M7.4 3H9M7.4 4.5H9M7.4 6H9" stroke="#3c8a3c" stroke-width="0.9"/></svg><span>PPRW(33d3c936)</span></span></div><div class="msg" style="top:743.7px">Could not set <span class="lk">invocation:4180b5d8-7a3e-4b63-a5f8-2aca259acd18</span> to <b class="st" style="color:#e89a2c">status:pending</b>: InvocationStatusTransitionError(<b class="st" style="color:#e89a2c">from_status:pending</b>, <b class="st" style="color:#e89a2c">to_status:pending</b>, allowed_statuses:[<b class="st" style="color:#c4392f">status:failed</b>, <b class="st" style="color:#c4392f">status:killed</b>,<br><b class="st" style="color:#d9772e">status:pending_recovery</b>, <b class="st" style="color:#3d9a5c">status:rerouted</b>, <b class="st" style="color:#3f8ad6">status:running</b>])</div><div class="ln" style="left:712px;top:779.1px"><span class="ig"><span class="ip"><svg width="9.5" height="9.5" viewBox="0 0 10 10" style="flex:none"><circle cx="5" cy="5" r="5" fill="#2f55d4"/><rect x="4.25" y="4.2" width="1.5" height="3.8" fill="#fff"/><circle cx="5" cy="2.7" r="0.85" fill="#fff"/></svg><span class="iid">4180b5d8-7a3e-4b63-a5f8-2aca259acd18</span><span class="suc">SUCCESS</span></span><span class="ib"><svg width="11" height="8" viewBox="0 0 11 8" style="flex:none"><path d="M0.8 7 L4 3.3 L6.3 5.5 L10.2 1" stroke="#2f55d4" stroke-width="1.4" fill="none" stroke-linecap="round" stroke-linejoin="round"/></svg></span></span></div><div class="row" style="top:805.2px;height:45.1px"></div><div class="ln" style="left:50.2px;top:811.5px"><span class="tsp">2026-03-21 08:05:07.441+01:00</span><span class="lvl">INFO</span><span class="rp"><svg width="9" height="9" viewBox="0 0 9 9" style="flex:none"><rect x="1.6" y="1.6" width="5.8" height="5.8" rx="0.8" fill="none" stroke="#3c8a3c" stroke-width="1.2"/><circle cx="4.5" cy="4.5" r="1.1" fill="#3c8a3c"/><path d="M3 0V1.6M4.5 0V1.6M6 0V1.6M3 7.4V9M4.5 7.4V9M6 7.4V9M0 3H1.6M0 4.5H1.6M0 6H1.6M7.4 3H9M7.4 4.5H9M7.4 6H9" stroke="#3c8a3c" stroke-width="0.9"/></svg><span>MTR(1f768d5b)</span></span><span class="rp"><svg width="9" height="9" viewBox="0 0 9 9" style="flex:none"><rect x="1.6" y="1.6" width="5.8" height="5.8" rx="0.8" fill="none" stroke="#3c8a3c" stroke-width="1.2"/><circle cx="4.5" cy="4.5" r="1.1" fill="#3c8a3c"/><path d="M3 0V1.6M4.5 0V1.6M6 0V1.6M3 7.4V9M4.5 7.4V9M6 7.4V9M0 3H1.6M0 4.5H1.6M0 6H1.6M7.4 3H9M7.4 4.5H9M7.4 6H9" stroke="#3c8a3c" stroke-width="0.9"/></svg><span>TR(17579835)</span></span></div><div class="msg" style="top:809.8px"><span class="lk">invocation:4180b5d8-7a3e-4b63-a5f8-2aca259acd18</span> <b class="st" style="color:#e89a2c">status:pending</b></div><div class="ln" style="left:712px;top:829.5px"><span class="ig"><span class="ip"><svg width="9.5" height="9.5" viewBox="0 0 10 10" style="flex:none"><circle cx="5" cy="5" r="5" fill="#2f55d4"/><rect x="4.25" y="4.2" width="1.5" height="3.8" fill="#fff"/><circle cx="5" cy="2.7" r="0.85" fill="#fff"/></svg><span class="iid">4180b5d8-7a3e-4b63-a5f8-2aca259acd18</span><span class="suc">SUCCESS</span></span><span class="ib"><svg width="11" height="8" viewBox="0 0 11 8" style="flex:none"><path d="M0.8 7 L4 3.3 L6.3 5.5 L10.2 1" stroke="#2f55d4" stroke-width="1.4" fill="none" stroke-linecap="round" stroke-linejoin="round"/></svg></span></span></div><div class="row" style="top:854.5px;height:52.2px"></div><div class="ln" style="left:50.2px;top:860.8px"><span class="tsp">2026-03-21 08:05:07.441+01:00</span><span class="lvl">INFO</span><span class="rp"><svg width="9" height="9" viewBox="0 0 9 9" style="flex:none"><rect x="1.6" y="1.6" width="5.8" height="5.8" rx="0.8" fill="none" stroke="#3c8a3c" stroke-width="1.2"/><circle cx="4.5" cy="4.5" r="1.1" fill="#3c8a3c"/><path d="M3 0V1.6M4.5 0V1.6M6 0V1.6M3 7.4V9M4.5 7.4V9M6 7.4V9M0 3H1.6M0 4.5H1.6M0 6H1.6M7.4 3H9M7.4 4.5H9M7.4 6H9" stroke="#3c8a3c" stroke-width="0.9"/></svg><span>PPR(210049ca)</span></span><span class="rp"><svg width="9" height="9" viewBox="0 0 9 9" style="flex:none"><rect x="1.6" y="1.6" width="5.8" height="5.8" rx="0.8" fill="none" stroke="#3c8a3c" stroke-width="1.2"/><circle cx="4.5" cy="4.5" r="1.1" fill="#3c8a3c"/><path d="M3 0V1.6M4.5 0V1.6M6 0V1.6M3 7.4V9M4.5 7.4V9M6 7.4V9M0 3H1.6M0 4.5H1.6M0 6H1.6M7.4 3H9M7.4 4.5H9M7.4 6H9" stroke="#3c8a3c" stroke-width="0.9"/></svg><span>PPRW(f26fd1fc)</span></span></div><div class="ln" style="left:50.2px;top:883.6px"><span class="ig"><span class="ip"><svg width="9.5" height="9.5" viewBox="0 0 10 10" style="flex:none"><circle cx="5" cy="5" r="5" fill="#2f55d4"/><rect x="4.25" y="4.2" width="1.5" height="3.8" fill="#fff"/><circle cx="5" cy="2.7" r="0.85" fill="#fff"/></svg><span class="iid">9b71c8ff-8cba-4428-b90f-ee2dfdc46ddb</span><span class="suc">SUCCESS</span></span><span class="ib"><svg width="11" height="8" viewBox="0 0 11 8" style="flex:none"><path d="M0.8 7 L4 3.3 L6.3 5.5 L10.2 1" stroke="#2f55d4" stroke-width="1.4" fill="none" stroke-linecap="round" stroke-linejoin="round"/></svg></span></span><span class="tp"><svg width="8" height="10" viewBox="0 0 8 10" style="flex:none"><path d="M0.5 0.5 H5.2 L7.5 2.8 V9.5 H0.5 Z" fill="#7a5510"/><path d="M2 5.8 L3.3 7.1 L5.8 4.3" stroke="#fdf2de" stroke-width="1" fill="none"/></svg><span>test_invocations_timeline_multi_runner.parent_task</span></span></div><div class="msg" style="top:859.1px"><span class="lk">invocation:9b71c8ff-8cba-4428-b90f-ee2dfdc46ddb</span> <b class="st" style="color:#3f8ad6">status:running</b></div><div class="row" style="top:910.8px;height:51.0px"></div><div class="ln" style="left:50.2px;top:917.1px"><span class="tsp">2026-03-21 08:05:07.443+01:00</span><span class="lvl">INFO</span><span class="rp"><svg width="9" height="9" viewBox="0 0 9 9" style="flex:none"><rect x="1.6" y="1.6" width="5.8" height="5.8" rx="0.8" fill="none" stroke="#3c8a3c" stroke-width="1.2"/><circle cx="4.5" cy="4.5" r="1.1" fill="#3c8a3c"/><path d="M3 0V1.6M4.5 0V1.6M6 0V1.6M3 7.4V9M4.5 7.4V9M6 7.4V9M0 3H1.6M0 4.5H1.6M0 6H1.6M7.4 3H9M7.4 4.5H9M7.4 6H9" stroke="#3c8a3c" stroke-width="0.9"/></svg><span>TR(3b6e1eb0)</span></span></div><div class="ln" style="left:50.2px;top:939.9px"><span class="ig hl"><span class="ip"><svg width="9.5" height="9.5" viewBox="0 0 10 10" style="flex:none"><circle cx="5" cy="5" r="5" fill="#2f55d4"/><rect x="4.25" y="4.2" width="1.5" height="3.8" fill="#fff"/><circle cx="5" cy="2.7" r="0.85" fill="#fff"/></svg><span class="iid">f2cc6c0e-7df1-4a3e-adb9-ed88d5ef2c39</span><span class="suc">SUCCESS</span></span><span class="ib"><svg width="11" height="8" viewBox="0 0 11 8" style="flex:none"><path d="M0.8 7 L4 3.3 L6.3 5.5 L10.2 1" stroke="#2f55d4" stroke-width="1.4" fill="none" stroke-linecap="round" stroke-linejoin="round"/></svg></span></span><span class="tp"><svg width="8" height="10" viewBox="0 0 8 10" style="flex:none"><path d="M0.5 0.5 H5.2 L7.5 2.8 V9.5 H0.5 Z" fill="#7a5510"/><path d="M2 5.8 L3.3 7.1 L5.8 4.3" stroke="#fdf2de" stroke-width="1" fill="none"/></svg><span>test_invocations_timeline_multi_runner.parent_task</span></span></div><div class="msg" style="top:915.4px">parallelizing <span class="lk">task:test_invocations_timeline_multi_runner.child_task</span></div><div class="ln" style="left:712px;top:935.1px"><span class="tp"><svg width="8" height="10" viewBox="0 0 8 10" style="flex:none"><path d="M0.5 0.5 H5.2 L7.5 2.8 V9.5 H0.5 Z" fill="#7a5510"/><path d="M2 5.8 L3.3 7.1 L5.8 4.3" stroke="#fdf2de" stroke-width="1" fill="none"/></svg><span>test_invocations_timeline_multi_runner.child_task</span></span></div><div class="row" style="top:966.2px;height:51.1px"></div><div class="ln" style="left:50.2px;top:972.5px"><span class="tsp">2026-03-21 08:05:07.443+01:00</span><span class="lvl">INFO</span><span class="rp"><svg width="9" height="9" viewBox="0 0 9 9" style="flex:none"><rect x="1.6" y="1.6" width="5.8" height="5.8" rx="0.8" fill="none" stroke="#3c8a3c" stroke-width="1.2"/><circle cx="4.5" cy="4.5" r="1.1" fill="#3c8a3c"/><path d="M3 0V1.6M4.5 0V1.6M6 0V1.6M3 7.4V9M4.5 7.4V9M6 7.4V9M0 3H1.6M0 4.5H1.6M0 6H1.6M7.4 3H9M7.4 4.5H9M7.4 6H9" stroke="#3c8a3c" stroke-width="0.9"/></svg><span>TR(3b6e1eb0)</span></span></div><div class="ln" style="left:50.2px;top:995.3px"><span class="ig hl"><span class="ip"><svg width="9.5" height="9.5" viewBox="0 0 10 10" style="flex:none"><circle cx="5" cy="5" r="5" fill="#2f55d4"/><rect x="4.25" y="4.2" width="1.5" height="3.8" fill="#fff"/><circle cx="5" cy="2.7" r="0.85" fill="#fff"/></svg><span class="iid">f2cc6c0e-7df1-4a3e-adb9-ed88d5ef2c39</span><span class="suc">SUCCESS</span></span><span class="ib"><svg width="11" height="8" viewBox="0 0 11 8" style="flex:none"><path d="M0.8 7 L4 3.3 L6.3 5.5 L10.2 1" stroke="#2f55d4" stroke-width="1.4" fill="none" stroke-linecap="round" stroke-linejoin="round"/></svg></span></span><span class="tp"><svg width="8" height="10" viewBox="0 0 8 10" style="flex:none"><path d="M0.5 0.5 H5.2 L7.5 2.8 V9.5 H0.5 Z" fill="#7a5510"/><path d="M2 5.8 L3.3 7.1 L5.8 4.3" stroke="#fdf2de" stroke-width="1" fill="none"/></svg><span>test_invocations_timeline_multi_runner.parent_task</span></span></div><div class="msg" style="top:970.8px">Processing 2 calls in batches of 100</div><div class="row" style="top:1021.9px;height:45.0px"></div><div class="ln" style="left:50.2px;top:1028.2px"><span class="tsp">2026-03-21 08:05:07.444+01:00</span><span class="lvl">INFO</span><span class="rp"><svg width="9" height="9" viewBox="0 0 9 9" style="flex:none"><rect x="1.6" y="1.6" width="5.8" height="5.8" rx="0.8" fill="none" stroke="#3c8a3c" stroke-width="1.2"/><circle cx="4.5" cy="4.5" r="1.1" fill="#3c8a3c"/><path d="M3 0V1.6M4.5 0V1.6M6 0V1.6M3 7.4V9M4.5 7.4V9M6 7.4V9M0 3H1.6M0 4.5H1.6M0 6H1.6M7.4 3H9M7.4 4.5H9M7.4 6H9" stroke="#3c8a3c" stroke-width="0.9"/></svg><span>TR(3b6e1eb0)</span></span></div><div class="msg" style="top:1026.5px"><span class="lk">invocation:03ecccde-561a-4e5f-aa16-9bad3aaa6989</span> <b class="st" style="color:#e89a2c">status:pending</b></div><div class="ln" style="left:712px;top:1046.2px"><span class="ig"><span class="ip"><svg width="9.5" height="9.5" viewBox="0 0 10 10" style="flex:none"><circle cx="5" cy="5" r="5" fill="#2f55d4"/><rect x="4.25" y="4.2" width="1.5" height="3.8" fill="#fff"/><circle cx="5" cy="2.7" r="0.85" fill="#fff"/></svg><span class="iid">03ecccde-561a-4e5f-aa16-9bad3aaa6989</span><span class="suc">SUCCESS</span></span><span class="ib"><svg width="11" height="8" viewBox="0 0 11 8" style="flex:none"><path d="M0.8 7 L4 3.3 L6.3 5.5 L10.2 1" stroke="#2f55d4" stroke-width="1.4" fill="none" stroke-linecap="round" stroke-linejoin="round"/></svg></span></span></div><div class="row" style="top:1070.9px;height:51.3px"></div><div class="ln" style="left:50.2px;top:1077.2px"><span class="tsp">2026-03-21 08:05:07.447+01:00</span><span class="lvl">INFO</span><span class="rp"><svg width="9" height="9" viewBox="0 0 9 9" style="flex:none"><rect x="1.6" y="1.6" width="5.8" height="5.8" rx="0.8" fill="none" stroke="#3c8a3c" stroke-width="1.2"/><circle cx="4.5" cy="4.5" r="1.1" fill="#3c8a3c"/><path d="M3 0V1.6M4.5 0V1.6M6 0V1.6M3 7.4V9M4.5 7.4V9M6 7.4V9M0 3H1.6M0 4.5H1.6M0 6H1.6M7.4 3H9M7.4 4.5H9M7.4 6H9" stroke="#3c8a3c" stroke-width="0.9"/></svg><span>PPR(210049ca)</span></span><span class="rp"><svg width="9" height="9" viewBox="0 0 9 9" style="flex:none"><rect x="1.6" y="1.6" width="5.8" height="5.8" rx="0.8" fill="none" stroke="#3c8a3c" stroke-width="1.2"/><circle cx="4.5" cy="4.5" r="1.1" fill="#3c8a3c"/><path d="M3 0V1.6M4.5 0V1.6M6 0V1.6M3 7.4V9M4.5 7.4V9M6 7.4V9M0 3H1.6M0 4.5H1.6M0 6H1.6M7.4 3H9M7.4 4.5H9M7.4 6H9" stroke="#3c8a3c" stroke-width="0.9"/></svg><span>PPRW(b22a9ba3)</span></span></div><div class="ln" style="left:50.2px;top:1100.0px"><span class="ig"><span class="ip"><svg width="9.5" height="9.5" viewBox="0 0 10 10" style="flex:none"><circle cx="5" cy="5" r="5" fill="#2f55d4"/><rect x="4.25" y="4.2" width="1.5" height="3.8" fill="#fff"/><circle cx="5" cy="2.7" r="0.85" fill="#fff"/></svg><span class="iid">aa820833-5a09-425d-926e-64968a90d221</span><span class="suc">SUCCESS</span></span><span class="ib"><svg width="11" height="8" viewBox="0 0 11 8" style="flex:none"><path d="M0.8 7 L4 3.3 L6.3 5.5 L10.2 1" stroke="#2f55d4" stroke-width="1.4" fill="none" stroke-linecap="round" stroke-linejoin="round"/></svg></span></span><span class="tp"><svg width="8" height="10" viewBox="0 0 8 10" style="flex:none"><path d="M0.5 0.5 H5.2 L7.5 2.8 V9.5 H0.5 Z" fill="#7a5510"/><path d="M2 5.8 L3.3 7.1 L5.8 4.3" stroke="#fdf2de" stroke-width="1" fill="none"/></svg><span>test_invocations_timeline_multi_runner.parent_task</span></span></div><div class="msg" style="top:1075.5px">parallelizing <span class="lk">task:test_invocations_timeline_multi_runner.child_task</span></div><div class="ln" style="left:712px;top:1095.2px"><span class="tp"><svg width="8" height="10" viewBox="0 0 8 10" style="flex:none"><path d="M0.5 0.5 H5.2 L7.5 2.8 V9.5 H0.5 Z" fill="#7a5510"/><path d="M2 5.8 L3.3 7.1 L5.8 4.3" stroke="#fdf2de" stroke-width="1" fill="none"/></svg><span>test_invocations_timeline_multi_runner.child_task</span></span></div><div class="row" style="top:1126.8px;height:50.7px"></div><div class="ln" style="left:50.2px;top:1133.1px"><span class="tsp">2026-03-21 08:05:07.447+01:00</span><span class="lvl">INFO</span><span class="rp"><svg width="9" height="9" viewBox="0 0 9 9" style="flex:none"><rect x="1.6" y="1.6" width="5.8" height="5.8" rx="0.8" fill="none" stroke="#3c8a3c" stroke-width="1.2"/><circle cx="4.5" cy="4.5" r="1.1" fill="#3c8a3c"/><path d="M3 0V1.6M4.5 0V1.6M6 0V1.6M3 7.4V9M4.5 7.4V9M6 7.4V9M0 3H1.6M0 4.5H1.6M0 6H1.6M7.4 3H9M7.4 4.5H9M7.4 6H9" stroke="#3c8a3c" stroke-width="0.9"/></svg><span>PPR(210049ca)</span></span><span class="rp"><svg width="9" height="9" viewBox="0 0 9 9" style="flex:none"><rect x="1.6" y="1.6" width="5.8" height="5.8" rx="0.8" fill="none" stroke="#3c8a3c" stroke-width="1.2"/><circle cx="4.5" cy="4.5" r="1.1" fill="#3c8a3c"/><path d="M3 0V1.6M4.5 0V1.6M6 0V1.6M3 7.4V9M4.5 7.4V9M6 7.4V9M0 3H1.6M0 4.5H1.6M0 6H1.6M7.4 3H9M7.4 4.5H9M7.4 6H9" stroke="#3c8a3c" stroke-width="0.9"/></svg><span>PPRW(b22a9ba3)</span></span></div><div class="ln" style="left:50.2px;top:1155.9px"><span class="ig"><span class="ip"><svg width="9.5" height="9.5" viewBox="0 0 10 10" style="flex:none"><circle cx="5" cy="5" r="5" fill="#2f55d4"/><rect x="4.25" y="4.2" width="1.5" height="3.8" fill="#fff"/><circle cx="5" cy="2.7" r="0.85" fill="#fff"/></svg><span class="iid">aa820833-5a09-425d-926e-64968a90d221</span><span class="suc">SUCCESS</span></span><span class="ib"><svg width="11" height="8" viewBox="0 0 11 8" style="flex:none"><path d="M0.8 7 L4 3.3 L6.3 5.5 L10.2 1" stroke="#2f55d4" stroke-width="1.4" fill="none" stroke-linecap="round" stroke-linejoin="round"/></svg></span></span><span class="tp"><svg width="8" height="10" viewBox="0 0 8 10" style="flex:none"><path d="M0.5 0.5 H5.2 L7.5 2.8 V9.5 H0.5 Z" fill="#7a5510"/><path d="M2 5.8 L3.3 7.1 L5.8 4.3" stroke="#fdf2de" stroke-width="1" fill="none"/></svg><span>test_invocations_timeline_multi_runner.parent_task</span></span></div><div class="msg" style="top:1131.4px">Processing 4 calls in batches of 100</div><div class="row" style="top:1182.1px;height:51.2px"></div><div class="ln" style="left:50.2px;top:1188.4px"><span class="tsp">2026-03-21 08:05:07.453+01:00</span><span class="lvl">INFO</span><span class="rp"><svg width="9" height="9" viewBox="0 0 9 9" style="flex:none"><rect x="1.6" y="1.6" width="5.8" height="5.8" rx="0.8" fill="none" stroke="#3c8a3c" stroke-width="1.2"/><circle cx="4.5" cy="4.5" r="1.1" fill="#3c8a3c"/><path d="M3 0V1.6M4.5 0V1.6M6 0V1.6M3 7.4V9M4.5 7.4V9M6 7.4V9M0 3H1.6M0 4.5H1.6M0 6H1.6M7.4 3H9M7.4 4.5H9M7.4 6H9" stroke="#3c8a3c" stroke-width="0.9"/></svg><span>PPR(210049ca)</span></span><span class="rp"><svg width="9" height="9" viewBox="0 0 9 9" style="flex:none"><rect x="1.6" y="1.6" width="5.8" height="5.8" rx="0.8" fill="none" stroke="#3c8a3c" stroke-width="1.2"/><circle cx="4.5" cy="4.5" r="1.1" fill="#3c8a3c"/><path d="M3 0V1.6M4.5 0V1.6M6 0V1.6M3 7.4V9M4.5 7.4V9M6 7.4V9M0 3H1.6M0 4.5H1.6M0 6H1.6M7.4 3H9M7.4 4.5H9M7.4 6H9" stroke="#3c8a3c" stroke-width="0.9"/></svg><span>PPRW(c2be6553)</span></span></div><div class="ln" style="left:50.2px;top:1211.2px"><span class="ig"><span class="ip"><svg width="9.5" height="9.5" viewBox="0 0 10 10" style="flex:none"><circle cx="5" cy="5" r="5" fill="#2f55d4"/><rect x="4.25" y="4.2" width="1.5" height="3.8" fill="#fff"/><circle cx="5" cy="2.7" r="0.85" fill="#fff"/></svg><span class="iid">3cd21a3b-5d9e-427f-9be3-cf01ffbefb40</span><span class="suc">SUCCESS</span></span><span class="ib"><svg width="11" height="8" viewBox="0 0 11 8" style="flex:none"><path d="M0.8 7 L4 3.3 L6.3 5.5 L10.2 1" stroke="#2f55d4" stroke-width="1.4" fill="none" stroke-linecap="round" stroke-linejoin="round"/></svg></span></span><span class="tp"><svg width="8" height="10" viewBox="0 0 8 10" style="flex:none"><path d="M0.5 0.5 H5.2 L7.5 2.8 V9.5 H0.5 Z" fill="#7a5510"/><path d="M2 5.8 L3.3 7.1 L5.8 4.3" stroke="#fdf2de" stroke-width="1" fill="none"/></svg><span>test_invocations_timeline_multi_runner.parent_task</span></span></div><div class="msg" style="top:1186.7px">parallelizing <span class="lk">task:test_invocations_timeline_multi_runner.child_task</span></div><div class="ln" style="left:712px;top:1206.4px"><span class="tp"><svg width="8" height="10" viewBox="0 0 8 10" style="flex:none"><path d="M0.5 0.5 H5.2 L7.5 2.8 V9.5 H0.5 Z" fill="#7a5510"/><path d="M2 5.8 L3.3 7.1 L5.8 4.3" stroke="#fdf2de" stroke-width="1" fill="none"/></svg><span>test_invocations_timeline_multi_runner.child_task</span></span></div><div class="row" style="top:1237.9px;height:51.4px"></div><div class="ln" style="left:50.2px;top:1244.2px"><span class="tsp">2026-03-21 08:05:07.457+01:00</span><span class="lvl">INFO</span><span class="rp"><svg width="9" height="9" viewBox="0 0 9 9" style="flex:none"><rect x="1.6" y="1.6" width="5.8" height="5.8" rx="0.8" fill="none" stroke="#3c8a3c" stroke-width="1.2"/><circle cx="4.5" cy="4.5" r="1.1" fill="#3c8a3c"/><path d="M3 0V1.6M4.5 0V1.6M6 0V1.6M3 7.4V9M4.5 7.4V9M6 7.4V9M0 3H1.6M0 4.5H1.6M0 6H1.6M7.4 3H9M7.4 4.5H9M7.4 6H9" stroke="#3c8a3c" stroke-width="0.9"/></svg><span>PPR(210049ca)</span></span><span class="rp"><svg width="9" height="9" viewBox="0 0 9 9" style="flex:none"><rect x="1.6" y="1.6" width="5.8" height="5.8" rx="0.8" fill="none" stroke="#3c8a3c" stroke-width="1.2"/><circle cx="4.5" cy="4.5" r="1.1" fill="#3c8a3c"/><path d="M3 0V1.6M4.5 0V1.6M6 0V1.6M3 7.4V9M4.5 7.4V9M6 7.4V9M0 3H1.6M0 4.5H1.6M0 6H1.6M7.4 3H9M7.4 4.5H9M7.4 6H9" stroke="#3c8a3c" stroke-width="0.9"/></svg><span>PPRW(c2be6553)</span></span></div><div class="ln" style="left:50.2px;top:1267.0px"><span class="ig"><span class="ip"><svg width="9.5" height="9.5" viewBox="0 0 10 10" style="flex:none"><circle cx="5" cy="5" r="5" fill="#2f55d4"/><rect x="4.25" y="4.2" width="1.5" height="3.8" fill="#fff"/><circle cx="5" cy="2.7" r="0.85" fill="#fff"/></svg><span class="iid">3cd21a3b-5d9e-427f-9be3-cf01ffbefb40</span><span class="suc">SUCCESS</span></span><span class="ib"><svg width="11" height="8" viewBox="0 0 11 8" style="flex:none"><path d="M0.8 7 L4 3.3 L6.3 5.5 L10.2 1" stroke="#2f55d4" stroke-width="1.4" fill="none" stroke-linecap="round" stroke-linejoin="round"/></svg></span></span><span class="tp"><svg width="8" height="10" viewBox="0 0 8 10" style="flex:none"><path d="M0.5 0.5 H5.2 L7.5 2.8 V9.5 H0.5 Z" fill="#7a5510"/><path d="M2 5.8 L3.3 7.1 L5.8 4.3" stroke="#fdf2de" stroke-width="1" fill="none"/></svg><span>test_invocations_timeline_multi_runner.parent_task</span></span></div><div class="msg" style="top:1242.5px">Processing 3 calls in batches of 100</div><div class="row" style="top:1293.8px;height:50.6px"></div><div class="ln" style="left:50.2px;top:1300.1px"><span class="tsp">2026-03-21 08:05:07.464+01:00</span><span class="lvl">INFO</span><span class="rp"><svg width="9" height="9" viewBox="0 0 9 9" style="flex:none"><rect x="1.6" y="1.6" width="5.8" height="5.8" rx="0.8" fill="none" stroke="#3c8a3c" stroke-width="1.2"/><circle cx="4.5" cy="4.5" r="1.1" fill="#3c8a3c"/><path d="M3 0V1.6M4.5 0V1.6M6 0V1.6M3 7.4V9M4.5 7.4V9M6 7.4V9M0 3H1.6M0 4.5H1.6M0 6H1.6M7.4 3H9M7.4 4.5H9M7.4 6H9" stroke="#3c8a3c" stroke-width="0.9"/></svg><span>MTR(1f768d5b)</span></span><span class="rp"><svg width="9" height="9" viewBox="0 0 9 9" style="flex:none"><rect x="1.6" y="1.6" width="5.8" height="5.8" rx="0.8" fill="none" stroke="#3c8a3c" stroke-width="1.2"/><circle cx="4.5" cy="4.5" r="1.1" fill="#3c8a3c"/><path d="M3 0V1.6M4.5 0V1.6M6 0V1.6M3 7.4V9M4.5 7.4V9M6 7.4V9M0 3H1.6M0 4.5H1.6M0 6H1.6M7.4 3H9M7.4 4.5H9M7.4 6H9" stroke="#3c8a3c" stroke-width="0.9"/></svg><span>TR(17579835)</span></span></div><div class="ln" style="left:50.2px;top:1322.9px"><span class="ig"><span class="ip"><svg width="9.5" height="9.5" viewBox="0 0 10 10" style="flex:none"><circle cx="5" cy="5" r="5" fill="#2f55d4"/><rect x="4.25" y="4.2" width="1.5" height="3.8" fill="#fff"/><circle cx="5" cy="2.7" r="0.85" fill="#fff"/></svg><span class="iid">4180b5d8-7a3e-4b63-a5f8-2aca259acd18</span><span class="suc">SUCCESS</span></span><span class="ib"><svg width="11" height="8" viewBox="0 0 11 8" style="flex:none"><path d="M0.8 7 L4 3.3 L6.3 5.5 L10.2 1" stroke="#2f55d4" stroke-width="1.4" fill="none" stroke-linecap="round" stroke-linejoin="round"/></svg></span></span><span class="tp"><svg width="8" height="10" viewBox="0 0 8 10" style="flex:none"><path d="M0.5 0.5 H5.2 L7.5 2.8 V9.5 H0.5 Z" fill="#7a5510"/><path d="M2 5.8 L3.3 7.1 L5.8 4.3" stroke="#fdf2de" stroke-width="1" fill="none"/></svg><span>test_invocations_timeline_multi_runner.parent_task</span></span></div><div class="msg" style="top:1298.4px"><span class="lk">invocation:4180b5d8-7a3e-4b63-a5f8-2aca259acd18</span> <b class="st" style="color:#3f8ad6">status:running</b></div><div class="tip" style="left:143.4px;top:964.3px;width:220px;height:34px"><div style="position:absolute;left:7px;top:4.6px;font:400 12px/13.9px 'Liberation Sans',sans-serif;color:#fff;white-space:pre">Invocation: f2cc6c0e-7df1-4a3e-adb9-
ed88d5ef2c39</div></div><div class="t" style="left:23.3px;top:1399.05px;font:600 11px/1 'Liberation Sans',sans-serif;color:#555b61;letter-spacing:0.68px;">INVOCATION TIMELINE</div><div class="t" style="left:170.9px;top:1399.39px;font:600 10.6px/1 'Liberation Sans',sans-serif;color:#2563eb;">open full</div><div class="b" style="left:170.90px;top:1409.60px;width:55.70px;height:1.00px;background:#2563eb"></div><svg class="b" style="left:217.50px;top:1400.00px;" width="10" height="9" viewBox="0 0 10 9"><path d="M0.8 4.5 H8.3 M5 1.2 L8.4 4.5 L5 7.8" stroke="#2563eb" stroke-width="1.5" fill="none" stroke-linecap="round" stroke-linejoin="round"/></svg><div class="b" style="left:23.30px;top:1418.30px;width:2103.30px;height:419.20px;background:#fff;border:1px solid #e8e4e0;border-radius:6px;box-sizing:border-box"></div><div class="b" style="left:24.30px;top:1469.00px;width:2000.00px;height:73.50px;background:#f8eeeb"></div><div class="b" style="left:24.30px;top:1545.00px;width:2000.00px;height:31.70px;background:#e1e6f7"></div><div class="b" style="left:24.30px;top:1578.70px;width:2000.00px;height:32.10px;background:#eef1fa"></div><div class="b" style="left:24.30px;top:1613.00px;width:2000.00px;height:31.60px;background:#e1e6f7"></div><div class="b" style="left:24.30px;top:1646.60px;width:2000.00px;height:32.10px;background:#eef1fa"></div><div class="b" style="left:24.30px;top:1680.80px;width:2000.00px;height:31.70px;background:#eff7e3"></div><div class="b" style="left:24.30px;top:1714.50px;width:2000.00px;height:52.20px;background:#f5faef"></div><div class="t" style="left:308.9px;top:1443.70px;font:400 12px/1 'Liberation Sans',sans-serif;color:#222;letter-spacing:0.1px;">07:05:06.428</div><div class="t" style="left:1134.7px;top:1443.70px;font:400 12px/1 'Liberation Sans',sans-serif;color:#222;letter-spacing:0.1px;">07:05:07.428</div><div class="b" style="left:1959.2px;top:1440px;width:64.3px;height:18px;overflow:hidden"><div class="t" style="left:0;top:3.7px;font:400 12px/1 'Liberation Sans',sans-serif;color:#222;letter-spacing:0.1px">07:05:08.428</div></div><svg class="b" style="left:24.00px;top:1440.00px;" width="2000" height="400" viewBox="0 0 2000 400"><line x1="319.8" y1="25" x2="319.8" y2="393" stroke="#dcdce2" stroke-width="1.2" stroke-dasharray="4 4"/><line x1="1145.1" y1="25" x2="1145.1" y2="393" stroke="#dcdce2" stroke-width="1.2" stroke-dasharray="4 4"/><line x1="1970.4" y1="25" x2="1970.4" y2="393" stroke="#dcdce2" stroke-width="1.2" stroke-dasharray="4 4"/><line x1="319.8" y1="23.59999999999991" x2="1999.5" y2="23.59999999999991" stroke="#808080" stroke-width="1.8"/><line x1="319.8" y1="18.5" x2="319.8" y2="24" stroke="#808080" stroke-width="1.3"/><line x1="1145.1" y1="18.5" x2="1145.1" y2="24" stroke="#808080" stroke-width="1.3"/><line x1="1970.4" y1="18.5" x2="1970.4" y2="24" stroke="#808080" stroke-width="1.3"/><defs><pattern id="hatch" patternUnits="userSpaceOnUse" width="8.3" height="8.3" patternTransform="rotate(45)"><rect width="8.3" height="8.3" fill="#5e9bd8"/><rect x="0" y="0" width="1.5" height="8.3" fill="#94bdea"/></pattern><filter id="glow" x="-50%" y="-50%" width="200%" height="200%"><feGaussianBlur stdDeviation="3"/></filter></defs><line x1="790.8" y1="45.0" x2="1024.6" y2="45.0" stroke="#a9b0b3" stroke-width="1.3" stroke-dasharray="3.5 2.5"/><line x1="778.0" y1="45.0" x2="1082.5" y2="66.9" stroke="#a9b0b3" stroke-width="1.3" stroke-dasharray="3.5 2.5"/><line x1="790.8" y1="45.0" x2="1116.6" y2="89.0" stroke="#a9b0b3" stroke-width="1.3" stroke-dasharray="3.5 2.5"/><line x1="725.0" y1="45.0" x2="1082.5" y2="66.9" stroke="#a9b0b3" stroke-width="1.3" stroke-dasharray="3.5 2.5"/><line x1="725.0" y1="45.0" x2="1116.6" y2="89.0" stroke="#a9b0b3" stroke-width="1.3" stroke-dasharray="3.5 2.5"/><line x1="778.0" y1="45.0" x2="1066.8" y2="155.0" stroke="#a9b0b3" stroke-width="1.3" stroke-dasharray="3.5 2.5"/><line x1="725.0" y1="45.0" x2="1066.8" y2="155.0" stroke="#a9b0b3" stroke-width="1.3" stroke-dasharray="3.5 2.5"/><line x1="725.0" y1="45.0" x2="1102.0" y2="189.0" stroke="#a9b0b3" stroke-width="1.3" stroke-dasharray="3.5 2.5"/><line x1="725.0" y1="45.0" x2="1138.0" y2="223.1" stroke="#a9b0b3" stroke-width="1.3" stroke-dasharray="3.5 2.5"/><line x1="725.0" y1="45.0" x2="1081.0" y2="291.0" stroke="#a9b0b3" stroke-width="1.3" stroke-dasharray="3.5 2.5"/><line x1="778.0" y1="45.0" x2="1151.7" y2="312.8" stroke="#a9b0b3" stroke-width="1.3" stroke-dasharray="3.5 2.5"/><line x1="725.0" y1="45.0" x2="1024.6" y2="45.0" stroke="#a9b0b3" stroke-width="1.3" stroke-dasharray="3.5 2.5"/><rect x="1024.6" y="35.1" width="64.1" height="19.8" rx="3.5" fill="#e8a84c"/><rect x="1084.7" y="35.1" width="404.3" height="19.8" rx="3.5" fill="#68b078"/><line x1="1090.7" y1="45.0" x2="1483.0" y2="45.0" stroke="#5a9bd0" stroke-width="1.6" stroke-dasharray="4 3.2"/><line x1="1030.6" y1="45.0" x2="1078.7" y2="45.0" stroke="#efbd72" stroke-width="1.4" stroke-dasharray="4 3.2" opacity=".7"/><circle cx="1024.6" cy="45.0" r="4.9" fill="#e8a030" stroke="#fff" stroke-width="1.8"/><circle cx="1084.7" cy="45.0" r="4.9" fill="#4d8fd6" stroke="#fff" stroke-width="1.8"/><circle cx="1489.0" cy="45.0" r="4.9" fill="#5aab6a" stroke="#fff" stroke-width="1.8"/><rect x="1080.0" y="54.5" width="507.0" height="24.6" rx="5" fill="#3366ff" opacity=".35" filter="url(#glow)"/><rect x="1082.5" y="57.0" width="22.1" height="19.8" rx="3.5" fill="#c9965e"/><rect x="1100.6" y="57.0" width="483.9" height="19.8" rx="3.5" fill="#68b078"/><line x1="1106.6" y1="66.9" x2="1578.5" y2="66.9" stroke="#5a9bd0" stroke-width="1.6" stroke-dasharray="4 3.2"/><line x1="1088.5" y1="66.9" x2="1094.6" y2="66.9" stroke="#efbd72" stroke-width="1.4" stroke-dasharray="4 3.2" opacity=".7"/><rect x="1081.0" y="55.5" width="505.0" height="22.8" rx="4.5" fill="none" stroke="#3366ff" stroke-width="2.6"/><line x1="1100.6" y1="56.0" x2="1100.6" y2="77.8" stroke="#3366ff" stroke-width="2.2"/><circle cx="1082.5" cy="66.9" r="4.9" fill="#e8a030" stroke="#3366ff" stroke-width="2.8"/><circle cx="1100.6" cy="66.9" r="4.9" fill="#4d8fd6" stroke="#3366ff" stroke-width="2.8"/><circle cx="1584.5" cy="66.9" r="4.9" fill="#5aab6a" stroke="#3366ff" stroke-width="2.8"/><rect x="1116.6" y="79.1" width="51.8" height="19.8" rx="3.5" fill="#e8a84c"/><rect x="1164.4" y="79.1" width="572.9" height="19.8" rx="3.5" fill="#68b078"/><line x1="1170.4" y1="89.0" x2="1731.3" y2="89.0" stroke="#5a9bd0" stroke-width="1.6" stroke-dasharray="4 3.2"/><line x1="1122.6" y1="89.0" x2="1158.4" y2="89.0" stroke="#efbd72" stroke-width="1.4" stroke-dasharray="4 3.2" opacity=".7"/><circle cx="1116.6" cy="89.0" r="4.9" fill="#e8a030" stroke="#fff" stroke-width="1.8"/><circle cx="1164.4" cy="89.0" r="4.9" fill="#4d8fd6" stroke="#fff" stroke-width="1.8"/><circle cx="1737.3" cy="89.0" r="4.9" fill="#5aab6a" stroke="#fff" stroke-width="1.8"/><rect x="1066.8" y="145.1" width="46.2" height="19.8" rx="3.5" fill="#e8a84c"/><rect x="1109.0" y="145.1" width="890.5" height="19.8" rx="3.5" fill="url(#hatch)"/><line x1="1072.8" y1="155.0" x2="1103.0" y2="155.0" stroke="#efbd72" stroke-width="1.4" stroke-dasharray="4 3.2" opacity=".7"/><circle cx="1066.8" cy="155.0" r="4.9" fill="#e8a030" stroke="#fff" stroke-width="1.8"/><circle cx="1109.0" cy="155.0" r="4.9" fill="#4d8fd6" stroke="#fff" stroke-width="1.8"/><rect x="1102.0" y="179.1" width="16.6" height="19.8" rx="3.5" fill="#e8a84c"/><rect x="1114.6" y="179.1" width="338.6" height="19.8" rx="3.5" fill="#68b078"/><line x1="1120.6" y1="189.0" x2="1447.2" y2="189.0" stroke="#5a9bd0" stroke-width="1.6" stroke-dasharray="4 3.2"/><line x1="1108.0" y1="189.0" x2="1108.6" y2="189.0" stroke="#efbd72" stroke-width="1.4" stroke-dasharray="4 3.2" opacity=".7"/><circle cx="1102.0" cy="189.0" r="4.9" fill="#e8a030" stroke="#fff" stroke-width="1.8"/><circle cx="1114.6" cy="189.0" r="4.9" fill="#4d8fd6" stroke="#fff" stroke-width="1.8"/><circle cx="1453.2" cy="189.0" r="4.9" fill="#5aab6a" stroke="#fff" stroke-width="1.8"/><rect x="1138.0" y="213.2" width="18.5" height="19.8" rx="3.5" fill="#e8a84c"/><rect x="1152.5" y="213.2" width="392.2" height="19.8" rx="3.5" fill="#68b078"/><line x1="1158.5" y1="223.1" x2="1538.7" y2="223.1" stroke="#5a9bd0" stroke-width="1.6" stroke-dasharray="4 3.2"/><line x1="1144.0" y1="223.1" x2="1146.5" y2="223.1" stroke="#efbd72" stroke-width="1.4" stroke-dasharray="4 3.2" opacity=".7"/><circle cx="1138.0" cy="223.1" r="4.9" fill="#e8a030" stroke="#fff" stroke-width="1.8"/><circle cx="1152.5" cy="223.1" r="4.9" fill="#4d8fd6" stroke="#fff" stroke-width="1.8"/><circle cx="1544.7" cy="223.1" r="4.9" fill="#5aab6a" stroke="#fff" stroke-width="1.8"/><rect x="1081.0" y="281.1" width="16.4" height="19.8" rx="3.5" fill="#e8a84c"/><rect x="1093.4" y="281.1" width="882.0" height="19.8" rx="3.5" fill="#68b078"/><line x1="1099.4" y1="291.0" x2="1969.4" y2="291.0" stroke="#5a9bd0" stroke-width="1.6" stroke-dasharray="4 3.2"/><line x1="1087.0" y1="291.0" x2="1087.4" y2="291.0" stroke="#efbd72" stroke-width="1.4" stroke-dasharray="4 3.2" opacity=".7"/><circle cx="1081.0" cy="291.0" r="4.9" fill="#e8a030" stroke="#fff" stroke-width="1.8"/><circle cx="1093.4" cy="291.0" r="4.9" fill="#4d8fd6" stroke="#fff" stroke-width="1.8"/><circle cx="1975.4" cy="291.0" r="4.9" fill="#5aab6a" stroke="#fff" stroke-width="1.8"/><rect x="1151.7" y="302.9" width="19.3" height="19.8" rx="3.5" fill="#e8a84c"/><rect x="1167.0" y="302.9" width="524.7" height="19.8" rx="3.5" fill="#68b078"/><line x1="1173.0" y1="312.8" x2="1685.7" y2="312.8" stroke="#5a9bd0" stroke-width="1.6" stroke-dasharray="4 3.2"/><line x1="1157.7" y1="312.8" x2="1161.0" y2="312.8" stroke="#efbd72" stroke-width="1.4" stroke-dasharray="4 3.2" opacity=".7"/><circle cx="1151.7" cy="312.8" r="4.9" fill="#e8a030" stroke="#fff" stroke-width="1.8"/><circle cx="1167.0" cy="312.8" r="4.9" fill="#4d8fd6" stroke="#fff" stroke-width="1.8"/><circle cx="1691.7" cy="312.8" r="4.9" fill="#5aab6a" stroke="#fff" stroke-width="1.8"/><circle cx="725" cy="45" r="8" fill="#3366ff" opacity=".25" filter="url(#glow)"/><circle cx="713.8" cy="45.0" r="5.0" fill="#95a5a6" stroke="#fff" stroke-width="1.6"/><circle cx="725.0" cy="45.0" r="6.0" fill="#95a5a6" stroke="#3366ff" stroke-width="2.2"/><circle cx="725.8" cy="45.0" r="5.0" fill="#95a5a6" stroke="#fff" stroke-width="1.4"/><circle cx="775.5" cy="45.0" r="5.0" fill="#95a5a6" stroke="#fff" stroke-width="1.6"/><circle cx="778.0" cy="45.0" r="5.0" fill="#95a5a6" stroke="#fff" stroke-width="1.6"/><circle cx="790.8" cy="45.0" r="5.0" fill="#95a5a6" stroke="#fff" stroke-width="1.6"/></svg><div class="t" style="left:32.6px;top:1491.82px;font:400 12.8px/1 'Liberation Sans',sans-serif;color:#3d3d3d;-webkit-text-stroke:0.2px #3d3d3d;">ThreadRunner(3b6e1eb)</div><div class="t" style="left:32.6px;top:1505.15px;font:400 11px/1 'Liberation Sans',sans-serif;color:#666;">KrsM3Pro.local (pid:82566 thread:8357458048)</div><div class="t" style="left:38.4px;top:1547.38px;font:700 12.5px/1 'Liberation Sans',sans-serif;color:#3352d0;">PersistentProcessRunner(210049c)</div><div class="t" style="left:38.4px;top:1561.30px;font:400 10px/1 'Liberation Sans',sans-serif;color:#222;">KrsM3Pro.local (pid:82631 thread:8357458048)</div><div class="t" style="left:44.4px;top:1581.92px;font:400 11.5px/1 'Liberation Sans',sans-serif;color:#444;">PPRWorker(b22a9ba)</div><div class="t" style="left:44.4px;top:1616.12px;font:400 11.5px/1 'Liberation Sans',sans-serif;color:#444;">PPRWorker(c2be655)</div><div class="t" style="left:48.1px;top:1628.78px;font:400 10.5px/1 'Liberation Sans',sans-serif;color:#666;">pid:82632</div><div class="t" style="left:44.4px;top:1650.22px;font:400 11.5px/1 'Liberation Sans',sans-serif;color:#444;">PPRWorker(f26fd1f)</div><div class="t" style="left:48.1px;top:1662.88px;font:400 10.5px/1 'Liberation Sans',sans-serif;color:#666;">pid:82633</div><div class="t" style="left:38.4px;top:1682.97px;font:700 12.5px/1 'Liberation Sans',sans-serif;color:#8fd14f;">MultiThreadRunner(1f768d5)</div><div class="t" style="left:38.4px;top:1697.10px;font:400 10px/1 'Liberation Sans',sans-serif;color:#222;">KrsM3Pro.local (pid:82628 thread:8357458048)</div><div class="t" style="left:44.4px;top:1727.92px;font:400 11.5px/1 'Liberation Sans',sans-serif;color:#444;">ThreadRunner(1757983)</div><div class="b" style="left:344.00px;top:1784.30px;width:11.60px;height:11.60px;background:#95a5a6;border-radius:2px"></div><div class="t" style="left:360.3px;top:1785.80px;font:400 10px/1 'Liberation Sans',sans-serif;color:#444;letter-spacing:-0.2px;">REGISTERED</div><div class="b" style="left:444.00px;top:1784.30px;width:11.60px;height:11.60px;background:#e0893b;border-radius:2px"></div><div class="t" style="left:460.3px;top:1785.80px;font:400 10px/1 'Liberation Sans',sans-serif;color:#444;letter-spacing:-0.2px;">CONCURRENCY_CONTROLLED</div><div class="b" style="left:628.00px;top:1784.30px;width:11.60px;height:11.60px;background:#c65f25;border-radius:2px"></div><div class="t" style="left:644.3px;top:1785.80px;font:400 10px/1 'Liberation Sans',sans-serif;color:#444;letter-spacing:-0.2px;">CONCURRENCY_CONTROLLED_FINAL</div><div class="b" style="left:854.00px;top:1784.30px;width:11.60px;height:11.60px;background:#4a9e84;border-radius:2px"></div><div class="t" style="left:870.3px;top:1785.80px;font:400 10px/1 'Liberation Sans',sans-serif;color:#444;letter-spacing:-0.2px;">REROUTED</div><div class="b" style="left:940.00px;top:1784.30px;width:11.60px;height:11.60px;background:#e8a63c;border-radius:2px"></div><div class="t" style="left:956.3px;top:1785.80px;font:400 10px/1 'Liberation Sans',sans-serif;color:#444;letter-spacing:-0.2px;">PENDING</div><div class="b" style="left:1018.40px;top:1784.30px;width:11.60px;height:11.60px;background:#e0893b;border-radius:2px"></div><div class="t" style="left:1034.7px;top:1785.80px;font:400 10px/1 'Liberation Sans',sans-serif;color:#444;letter-spacing:-0.2px;">PENDING_RECOVERY</div><div class="b" style="left:1161.20px;top:1784.30px;width:11.60px;height:11.60px;background:#4a90d9;border-radius:2px"></div><div class="t" style="left:1177.5px;top:1785.80px;font:400 10px/1 'Liberation Sans',sans-serif;color:#444;letter-spacing:-0.2px;">RUNNING</div><div class="b" style="left:1240.50px;top:1784.30px;width:11.60px;height:11.60px;background:#e0893b;border-radius:2px"></div><div class="t" style="left:1256.8px;top:1785.80px;font:400 10px/1 'Liberation Sans',sans-serif;color:#444;letter-spacing:-0.2px;">RUNNING_RECOVERY</div><div class="b" style="left:1382.00px;top:1784.30px;width:11.60px;height:11.60px;background:#5bb89b;border-radius:2px"></div><div class="t" style="left:1398.3px;top:1785.80px;font:400 10px/1 'Liberation Sans',sans-serif;color:#444;letter-spacing:-0.2px;">PAUSED</div><div class="b" style="left:1454.70px;top:1784.30px;width:11.60px;height:11.60px;background:#3b78b5;border-radius:2px"></div><div class="t" style="left:1471.0px;top:1785.80px;font:400 10px/1 'Liberation Sans',sans-serif;color:#444;letter-spacing:-0.2px;">RESUMED</div><div class="b" style="left:1533.00px;top:1784.30px;width:11.60px;height:11.60px;background:#b03e31;border-radius:2px"></div><div class="t" style="left:1549.3px;top:1785.80px;font:400 10px/1 'Liberation Sans',sans-serif;color:#444;letter-spacing:-0.2px;">KILLED</div><div class="b" style="left:1605.70px;top:1784.30px;width:11.60px;height:11.60px;background:#58a860;border-radius:2px"></div><div class="t" style="left:1622.0px;top:1785.80px;font:400 10px/1 'Liberation Sans',sans-serif;color:#444;letter-spacing:-0.2px;">SUCCESS</div><div class="b" style="left:1684.50px;top:1784.30px;width:11.60px;height:11.60px;background:#e0574a;border-radius:2px"></div><div class="t" style="left:1700.8px;top:1785.80px;font:400 10px/1 'Liberation Sans',sans-serif;color:#444;letter-spacing:-0.2px;">FAILED</div><div class="b" style="left:1756.70px;top:1784.30px;width:11.60px;height:11.60px;background:#9656b8;border-radius:2px"></div><div class="t" style="left:1773.0px;top:1785.80px;font:400 10px/1 'Liberation Sans',sans-serif;color:#444;letter-spacing:-0.2px;">RETRY</div><div class="t" style="left:23.3px;top:1858.35px;font:600 11px/1 'Liberation Sans',sans-serif;color:#555b61;letter-spacing:0.2px;">REFERENCES</div><div class="b" style="left:109.00px;top:1854.20px;width:25.80px;height:16.80px;background:#6c757d;border-radius:5px"></div><div class="t" style="left:115.3px;top:1857.67px;font:700 10.5px/1 'Liberation Sans',sans-serif;color:#fff;">18</div><div class="b" style="left:23.50px;top:1879.30px;width:2102.50px;height:235.90px;background:#fff;border:1px solid #e6ddd7;border-radius:6px;box-sizing:border-box"></div><svg class="b" style="left:40.90px;top:1890.20px;" width="10" height="10" viewBox="0 0 10 10"><circle cx="5" cy="5" r="5" fill="#6a6f74"/><rect x="4.3" y="4.2" width="1.4" height="3.8" fill="#fff"/><circle cx="5" cy="2.7" r="0.8" fill="#fff"/></svg><div class="t" style="left:55.1px;top:1890.58px;font:600 10.5px/1 'Liberation Sans',sans-serif;color:#5f6368;letter-spacing:0.5px;">INVOCATIONS (8)</div><div class="b" style="left:40.20px;top:1908.60px;width:219.00px;height:44.80px;background:#eef2fd;border:1px solid #bccff3;border-radius:4px;box-sizing:border-box"></div><div class="t" style="left:49.4px;top:1915.70px;font:700 12px/1 'Liberation Sans',sans-serif;color:#2f55d4;">7c8d103a-b0a...</div><div class="b" style="left:180.20px;top:1916.40px;width:52.80px;height:12.50px;background:#d3e5d6;border-radius:2px"></div><div class="t" style="left:184.8px;top:1918.45px;font:700 9px/1 'Liberation Sans',sans-serif;color:#1f5a2e;">SUCCESS</div><svg class="b" style="left:237.70px;top:1918.50px;" width="13" height="9" viewBox="0 0 13 9"><path d="M0.8 8 L4.5 3.6 L7.3 6.3 L12 1" stroke="#555" stroke-width="1.5" fill="none" stroke-linecap="round" stroke-linejoin="round"/></svg><div class="t" style="left:49.4px;top:1934.25px;font:400 11px/1 'Liberation Sans',sans-serif;color:#3b3b3b;letter-spacing:-0.04px;">test_invocations_timeline_multi_runner....</div><div class="b" style="left:265.50px;top:1908.60px;width:219.00px;height:44.80px;background:#eef2fd;border:1px solid #bccff3;border-radius:4px;box-sizing:border-box"></div><div class="t" style="left:274.7px;top:1915.70px;font:700 12px/1 'Liberation Sans',sans-serif;color:#2f55d4;">b3dad552-d72...</div><div class="b" style="left:405.50px;top:1916.40px;width:52.80px;height:12.50px;background:#d3e5d6;border-radius:2px"></div><div class="t" style="left:410.1px;top:1918.45px;font:700 9px/1 'Liberation Sans',sans-serif;color:#1f5a2e;">SUCCESS</div><svg class="b" style="left:463.00px;top:1918.50px;" width="13" height="9" viewBox="0 0 13 9"><path d="M0.8 8 L4.5 3.6 L7.3 6.3 L12 1" stroke="#555" stroke-width="1.5" fill="none" stroke-linecap="round" stroke-linejoin="round"/></svg><div class="t" style="left:274.7px;top:1934.25px;font:400 11px/1 'Liberation Sans',sans-serif;color:#3b3b3b;letter-spacing:-0.04px;">test_invocations_timeline_multi_runner....</div><div class="b" style="left:490.50px;top:1908.60px;width:219.00px;height:44.80px;background:#eef2fd;border:1px solid #bccff3;border-radius:4px;box-sizing:border-box"></div><div class="t" style="left:499.7px;top:1915.70px;font:700 12px/1 'Liberation Sans',sans-serif;color:#2f55d4;">9b71c8ff-8cb...</div><div class="b" style="left:630.50px;top:1916.40px;width:52.80px;height:12.50px;background:#d3e5d6;border-radius:2px"></div><div class="t" style="left:635.1px;top:1918.45px;font:700 9px/1 'Liberation Sans',sans-serif;color:#1f5a2e;">SUCCESS</div><svg class="b" style="left:688.00px;top:1918.50px;" width="13" height="9" viewBox="0 0 13 9"><path d="M0.8 8 L4.5 3.6 L7.3 6.3 L12 1" stroke="#555" stroke-width="1.5" fill="none" stroke-linecap="round" stroke-linejoin="round"/></svg><div class="t" style="left:499.7px;top:1934.25px;font:400 11px/1 'Liberation Sans',sans-serif;color:#3b3b3b;letter-spacing:-0.04px;">test_invocations_timeline_multi_runner....</div><div class="b" style="left:715.50px;top:1908.60px;width:219.00px;height:44.80px;background:#eef2fd;border:1px solid #bccff3;border-radius:4px;box-sizing:border-box"></div><div class="t" style="left:724.7px;top:1915.70px;font:700 12px/1 'Liberation Sans',sans-serif;color:#2f55d4;">4180b5d8-7a3...</div><div class="b" style="left:855.50px;top:1916.40px;width:52.80px;height:12.50px;background:#d3e5d6;border-radius:2px"></div><div class="t" style="left:860.1px;top:1918.45px;font:700 9px/1 'Liberation Sans',sans-serif;color:#1f5a2e;">SUCCESS</div><svg class="b" style="left:913.00px;top:1918.50px;" width="13" height="9" viewBox="0 0 13 9"><path d="M0.8 8 L4.5 3.6 L7.3 6.3 L12 1" stroke="#555" stroke-width="1.5" fill="none" stroke-linecap="round" stroke-linejoin="round"/></svg><div class="t" style="left:724.7px;top:1934.25px;font:400 11px/1 'Liberation Sans',sans-serif;color:#3b3b3b;letter-spacing:-0.04px;">test_invocations_timeline_multi_runner....</div><div class="b" style="left:940.00px;top:1908.60px;width:219.00px;height:44.80px;background:#dfe8fc;border:1px solid #3a6ee8;box-shadow:0 0 0 2px #3a6ee8;border-radius:4px;box-sizing:border-box"></div><div class="t" style="left:949.2px;top:1915.70px;font:700 12px/1 'Liberation Sans',sans-serif;color:#2f55d4;">f2cc6c0e-7df...</div><div class="b" style="left:1080.00px;top:1916.40px;width:52.80px;height:12.50px;background:#d3e5d6;border-radius:2px"></div><div class="t" style="left:1084.6px;top:1918.45px;font:700 9px/1 'Liberation Sans',sans-serif;color:#1f5a2e;">SUCCESS</div><svg class="b" style="left:1137.50px;top:1918.50px;" width="13" height="9" viewBox="0 0 13 9"><path d="M0.8 8 L4.5 3.6 L7.3 6.3 L12 1" stroke="#555" stroke-width="1.5" fill="none" stroke-linecap="round" stroke-linejoin="round"/></svg><div class="t" style="left:949.2px;top:1934.25px;font:400 11px/1 'Liberation Sans',sans-serif;color:#3b3b3b;letter-spacing:-0.04px;">test_invocations_timeline_multi_runner....</div><div class="b" style="left:1166.00px;top:1908.60px;width:219.00px;height:44.80px;background:#eef2fd;border:1px solid #bccff3;border-radius:4px;box-sizing:border-box"></div><div class="t" style="left:1175.2px;top:1915.70px;font:700 12px/1 'Liberation Sans',sans-serif;color:#2f55d4;">03ecccde-561...</div><div class="b" style="left:1306.00px;top:1916.40px;width:52.80px;height:12.50px;background:#d3e5d6;border-radius:2px"></div><div class="t" style="left:1310.6px;top:1918.45px;font:700 9px/1 'Liberation Sans',sans-serif;color:#1f5a2e;">SUCCESS</div><svg class="b" style="left:1363.50px;top:1918.50px;" width="13" height="9" viewBox="0 0 13 9"><path d="M0.8 8 L4.5 3.6 L7.3 6.3 L12 1" stroke="#555" stroke-width="1.5" fill="none" stroke-linecap="round" stroke-linejoin="round"/></svg><div class="t" style="left:1175.2px;top:1934.25px;font:400 11px/1 'Liberation Sans',sans-serif;color:#3b3b3b;letter-spacing:-0.04px;">test_invocations_timeline_multi_runner....</div><div class="b" style="left:1390.90px;top:1908.60px;width:219.00px;height:44.80px;background:#eef2fd;border:1px solid #bccff3;border-radius:4px;box-sizing:border-box"></div><div class="t" style="left:1400.1px;top:1915.70px;font:700 12px/1 'Liberation Sans',sans-serif;color:#2f55d4;">aa820833-5a0...</div><div class="b" style="left:1530.90px;top:1916.40px;width:52.80px;height:12.50px;background:#d3e5d6;border-radius:2px"></div><div class="t" style="left:1535.5px;top:1918.45px;font:700 9px/1 'Liberation Sans',sans-serif;color:#1f5a2e;">SUCCESS</div><svg class="b" style="left:1588.40px;top:1918.50px;" width="13" height="9" viewBox="0 0 13 9"><path d="M0.8 8 L4.5 3.6 L7.3 6.3 L12 1" stroke="#555" stroke-width="1.5" fill="none" stroke-linecap="round" stroke-linejoin="round"/></svg><div class="t" style="left:1400.1px;top:1934.25px;font:400 11px/1 'Liberation Sans',sans-serif;color:#3b3b3b;letter-spacing:-0.04px;">test_invocations_timeline_multi_runner....</div><div class="b" style="left:1615.90px;top:1908.60px;width:219.00px;height:44.80px;background:#eef2fd;border:1px solid #bccff3;border-radius:4px;box-sizing:border-box"></div><div class="t" style="left:1625.1px;top:1915.70px;font:700 12px/1 'Liberation Sans',sans-serif;color:#2f55d4;">3cd21a3b-5d9...</div><div class="b" style="left:1755.90px;top:1916.40px;width:52.80px;height:12.50px;background:#d3e5d6;border-radius:2px"></div><div class="t" style="left:1760.5px;top:1918.45px;font:700 9px/1 'Liberation Sans',sans-serif;color:#1f5a2e;">SUCCESS</div><svg class="b" style="left:1813.40px;top:1918.50px;" width="13" height="9" viewBox="0 0 13 9"><path d="M0.8 8 L4.5 3.6 L7.3 6.3 L12 1" stroke="#555" stroke-width="1.5" fill="none" stroke-linecap="round" stroke-linejoin="round"/></svg><div class="t" style="left:1625.1px;top:1934.25px;font:400 11px/1 'Liberation Sans',sans-serif;color:#3b3b3b;letter-spacing:-0.04px;">test_invocations_timeline_multi_runner....</div><svg class="b" style="left:40.90px;top:1964.50px;" width="10" height="10" viewBox="0 0 10 10"><circle cx="5" cy="5" r="4.3" fill="none" stroke="#8a8f94" stroke-width="1.3"/><circle cx="5" cy="5" r="2.3" fill="#8a8f94"/></svg><div class="t" style="left:55.1px;top:1964.38px;font:600 10.5px/1 'Liberation Sans',sans-serif;color:#5f6368;letter-spacing:0.45px;">RUNNERS (8)</div><div class="b" style="left:40.20px;top:1982.40px;width:149.20px;height:61.20px;background:#eff8ec;border:1px solid #bde2b4;border-radius:4px;box-sizing:border-box"></div><div class="t" style="left:49.4px;top:1989.80px;font:700 12px/1 'Liberation Sans',sans-serif;color:#3b8a35;">3b6e1eb0-810...</div><div class="t" style="left:49.4px;top:2007.55px;font:400 11px/1 'Liberation Sans',sans-serif;color:#2a2a2a;letter-spacing:-0.1px;-webkit-text-stroke:0.2px #2a2a2a;">ThreadRunner</div><div class="t" style="left:49.4px;top:2024.70px;font:400 10.7px/1 'Liberation Sans',sans-serif;color:#666;font-style:italic;">KrsM3Pro.local</div><div class="b" style="left:195.60px;top:1982.40px;width:149.20px;height:61.20px;background:#eff8ec;border:1px solid #bde2b4;border-radius:4px;box-sizing:border-box"></div><div class="t" style="left:204.8px;top:1989.80px;font:700 12px/1 'Liberation Sans',sans-serif;color:#3b8a35;">1f768d5b-763...</div><div class="t" style="left:204.8px;top:2007.55px;font:400 11px/1 'Liberation Sans',sans-serif;color:#2a2a2a;letter-spacing:-0.1px;-webkit-text-stroke:0.2px #2a2a2a;">MultiThreadRunner</div><div class="t" style="left:204.8px;top:2024.70px;font:400 10.7px/1 'Liberation Sans',sans-serif;color:#666;font-style:italic;">KrsM3Pro.local</div><div class="b" style="left:350.50px;top:1982.40px;width:149.20px;height:61.20px;background:#eff8ec;border:1px solid #bde2b4;border-radius:4px;box-sizing:border-box"></div><div class="t" style="left:359.7px;top:1989.80px;font:700 12px/1 'Liberation Sans',sans-serif;color:#3b8a35;">17579835-cf7...</div><div class="t" style="left:359.7px;top:2007.55px;font:400 11px/1 'Liberation Sans',sans-serif;color:#2a2a2a;letter-spacing:-0.1px;-webkit-text-stroke:0.2px #2a2a2a;">ThreadRunner</div><div class="t" style="left:359.7px;top:2024.70px;font:400 10.7px/1 'Liberation Sans',sans-serif;color:#666;font-style:italic;">KrsM3Pro.local</div><div class="b" style="left:505.30px;top:1982.40px;width:149.20px;height:61.20px;background:#eff8ec;border:1px solid #bde2b4;border-radius:4px;box-sizing:border-box"></div><div class="t" style="left:514.5px;top:1989.80px;font:700 12px/1 'Liberation Sans',sans-serif;color:#3b8a35;">210049ca-03b...</div><div class="t" style="left:514.5px;top:2007.55px;font:400 11px/1 'Liberation Sans',sans-serif;color:#2a2a2a;letter-spacing:-0.1px;-webkit-text-stroke:0.2px #2a2a2a;">PersistentProcessRunner</div><div class="t" style="left:514.5px;top:2024.70px;font:400 10.7px/1 'Liberation Sans',sans-serif;color:#666;font-style:italic;">KrsM3Pro.local</div><div class="b" style="left:660.70px;top:1982.40px;width:149.20px;height:61.20px;background:#eff8ec;border:1px solid #bde2b4;border-radius:4px;box-sizing:border-box"></div><div class="t" style="left:669.9px;top:1989.80px;font:700 12px/1 'Liberation Sans',sans-serif;color:#3b8a35;">f26fd1fc-867...</div><div class="t" style="left:669.9px;top:2007.55px;font:400 11px/1 'Liberation Sans',sans-serif;color:#2a2a2a;letter-spacing:-0.1px;-webkit-text-stroke:0.2px #2a2a2a;">PPRWorker</div><div class="t" style="left:669.9px;top:2024.70px;font:400 10.7px/1 'Liberation Sans',sans-serif;color:#666;font-style:italic;">KrsM3Pro.local</div><div class="b" style="left:815.50px;top:1982.40px;width:149.20px;height:61.20px;background:#eff8ec;border:1px solid #bde2b4;border-radius:4px;box-sizing:border-box"></div><div class="t" style="left:824.7px;top:1989.80px;font:700 12px/1 'Liberation Sans',sans-serif;color:#3b8a35;">33d3c936-144...</div><div class="t" style="left:824.7px;top:2007.55px;font:400 11px/1 'Liberation Sans',sans-serif;color:#2a2a2a;letter-spacing:-0.1px;-webkit-text-stroke:0.2px #2a2a2a;">PPRWorker</div><div class="t" style="left:824.7px;top:2024.70px;font:400 10.7px/1 'Liberation Sans',sans-serif;color:#666;font-style:italic;">KrsM3Pro.local</div><div class="b" style="left:970.30px;top:1982.40px;width:149.20px;height:61.20px;background:#eff8ec;border:1px solid #bde2b4;border-radius:4px;box-sizing:border-box"></div><div class="t" style="left:979.5px;top:1989.80px;font:700 12px/1 'Liberation Sans',sans-serif;color:#3b8a35;">b22a9ba3-f26...</div><div class="t" style="left:979.5px;top:2007.55px;font:400 11px/1 'Liberation Sans',sans-serif;color:#2a2a2a;letter-spacing:-0.1px;-webkit-text-stroke:0.2px #2a2a2a;">PPRWorker</div><div class="t" style="left:979.5px;top:2024.70px;font:400 10.7px/1 'Liberation Sans',sans-serif;color:#666;font-style:italic;">KrsM3Pro.local</div><div class="b" style="left:1126.00px;top:1982.40px;width:149.20px;height:61.20px;background:#eff8ec;border:1px solid #bde2b4;border-radius:4px;box-sizing:border-box"></div><div class="t" style="left:1135.2px;top:1989.80px;font:700 12px/1 'Liberation Sans',sans-serif;color:#3b8a35;">c2be6553-aaf...</div><div class="t" style="left:1135.2px;top:2007.55px;font:400 11px/1 'Liberation Sans',sans-serif;color:#2a2a2a;letter-spacing:-0.1px;-webkit-text-stroke:0.2px #2a2a2a;">PPRWorker</div><div class="t" style="left:1135.2px;top:2024.70px;font:400 10.7px/1 'Liberation Sans',sans-serif;color:#666;font-style:italic;">KrsM3Pro.local</div><svg class="b" style="left:41.50px;top:2054.00px;" width="9" height="11" viewBox="0 0 9 11"><path d="M0.5 0.5 H5.8 L8.5 3.2 V10.5 H0.5 Z" fill="#6a6f74"/><path d="M2.2 6.3 L3.7 7.8 L6.5 4.6" stroke="#fff" stroke-width="1.1" fill="none"/></svg><div class="t" style="left:55.6px;top:2054.07px;font:600 10.5px/1 'Liberation Sans',sans-serif;color:#5f6368;letter-spacing:0.37px;">TASKS (2)</div><div class="b" style="left:40.40px;top:2074.20px;width:289.00px;height:22.50px;background:#fdf3df;border:1px solid #efd6a6;border-radius:3px;box-sizing:border-box"></div><div class="t" style="left:49.2px;top:2078.89px;font:400 11.9px/1 'Liberation Sans',sans-serif;color:#7a5510;">test_invocations_timeline_multi_runner.parent_task</div><div class="b" style="left:338.20px;top:2074.20px;width:280.60px;height:22.50px;background:#fdf3df;border:1px solid #efd6a6;border-radius:3px;box-sizing:border-box"></div><div class="t" style="left:347.0px;top:2078.89px;font:400 11.9px/1 'Liberation Sans',sans-serif;color:#7a5510;">test_invocations_timeline_multi_runner.child_task</div>
</body></html>
